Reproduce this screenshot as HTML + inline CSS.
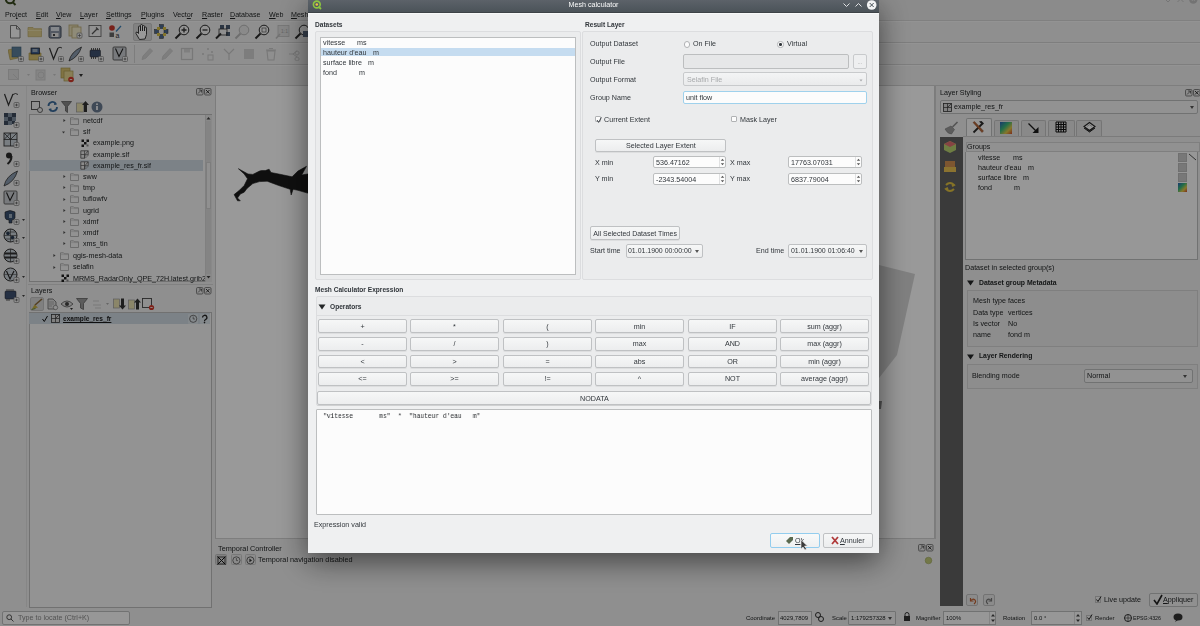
<!DOCTYPE html>
<html><head><meta charset="utf-8"><style>
html,body{margin:0;padding:0;width:1200px;height:626px;overflow:hidden;background:#8f8f8f;font-family:"Liberation Sans", sans-serif;}
.t{position:absolute;white-space:pre;will-change:transform;}
.b{position:absolute;box-sizing:border-box;}
#main{position:absolute;left:0;top:0;width:1200px;height:626px;}
</style></head><body>
<div id="main">
<div class="b" style="left:0px;top:0px;width:1200px;height:626px;background:#eeeeee;"></div>
<div class="b" style="left:0px;top:0px;width:1200px;height:21px;background:#e8e8e8;"></div>
<div class="b" style="left:0px;top:20px;width:1200px;height:1px;background:#d6d6d6;"></div>
<div class="b" style="left:0px;top:42px;width:1200px;height:1px;background:#d2d2d2;"></div>
<div class="b" style="left:0px;top:64px;width:1200px;height:1px;background:#d2d2d2;"></div>
<div class="b" style="left:0px;top:85px;width:1200px;height:1px;background:#d2d2d2;"></div>
<div class="b" style="left:0px;top:21px;width:1200px;height:1px;background:#f6f6f6;"></div>
<div class="b" style="left:0px;top:43px;width:1200px;height:1px;background:#f6f6f6;"></div>
<div class="b" style="left:0px;top:65px;width:1200px;height:1px;background:#f6f6f6;"></div>
<svg class="b" style="left:3px;top:-6px" width="14" height="12"><circle cx="7" cy="5" r="4.2" fill="none" stroke="#3a4a20" stroke-width="2"/><path d="M9.5 8 l3 3" stroke="#3a4a20" stroke-width="2"/></svg>
<svg class="b" style="left:1160px;top:-4px" width="40" height="10"><path d="M5 3 l3 3 l3 -3" stroke="#c4c4c4" fill="none"/><path d="M17.5 6 l3 -3 l3 3" stroke="#c4c4c4" fill="none"/><circle cx="33.3" cy="3.5" r="4.2" fill="#c0c0c0"/><path d="M31.8 2 l3 3 M34.8 2 l-3 3" stroke="#e8e8e8" stroke-width="0.8"/></svg>
<div class="t" style="left:5.2px;top:9.21px;font-size:7.1px;line-height:12px;color:#232627;font-weight:normal;font-family:'Liberation Sans', sans-serif;">Pro<u>j</u>ect</div>
<div class="t" style="left:35.6px;top:9.21px;font-size:7.1px;line-height:12px;color:#232627;font-weight:normal;font-family:'Liberation Sans', sans-serif;"><u>E</u>dit</div>
<div class="t" style="left:56.3px;top:9.21px;font-size:7.1px;line-height:12px;color:#232627;font-weight:normal;font-family:'Liberation Sans', sans-serif;"><u>V</u>iew</div>
<div class="t" style="left:80.3px;top:9.21px;font-size:7.1px;line-height:12px;color:#232627;font-weight:normal;font-family:'Liberation Sans', sans-serif;"><u>L</u>ayer</div>
<div class="t" style="left:106.4px;top:9.21px;font-size:7.1px;line-height:12px;color:#232627;font-weight:normal;font-family:'Liberation Sans', sans-serif;"><u>S</u>ettings</div>
<div class="t" style="left:140.8px;top:9.21px;font-size:7.1px;line-height:12px;color:#232627;font-weight:normal;font-family:'Liberation Sans', sans-serif;"><u>P</u>lugins</div>
<div class="t" style="left:172.6px;top:9.21px;font-size:7.1px;line-height:12px;color:#232627;font-weight:normal;font-family:'Liberation Sans', sans-serif;">Vect<u>o</u>r</div>
<div class="t" style="left:201.5px;top:9.21px;font-size:7.1px;line-height:12px;color:#232627;font-weight:normal;font-family:'Liberation Sans', sans-serif;"><u>R</u>aster</div>
<div class="t" style="left:229.9px;top:9.21px;font-size:7.1px;line-height:12px;color:#232627;font-weight:normal;font-family:'Liberation Sans', sans-serif;"><u>D</u>atabase</div>
<div class="t" style="left:268.7px;top:9.21px;font-size:7.1px;line-height:12px;color:#232627;font-weight:normal;font-family:'Liberation Sans', sans-serif;"><u>W</u>eb</div>
<div class="t" style="left:291.4px;top:9.21px;font-size:7.1px;line-height:12px;color:#232627;font-weight:normal;font-family:'Liberation Sans', sans-serif;"><u>M</u>esh</div>
<svg class="b" style="left:8px;top:24px" width="14" height="15" viewBox="0 0 14 15"><path d="M2.5 1.5 h6 l3.5 3.5 v9 h-9.5z" fill="#fbfbfb" stroke="#6a6a6a" stroke-width="0.9"/><path d="M8.5 1.5 v3.5 h3.5" fill="none" stroke="#6a6a6a" stroke-width="0.9"/></svg>
<svg class="b" style="left:27px;top:25px" width="16" height="13" viewBox="0 0 16 13"><path d="M1 2.5 h5 l1.2 1.2 h7.3 v8 h-13.5z" fill="#dccb8c" stroke="#c2b070" stroke-width="0.8"/><path d="M1 5.5 h13.5" stroke="#e8dca8"/></svg>
<svg class="b" style="left:47.5px;top:24.5px" width="14" height="14" viewBox="0 0 14 14"><rect x="1" y="1" width="12" height="12" rx="1.5" fill="#8b95a5" stroke="#3f4a5a" stroke-width="1"/><rect x="3" y="2" width="8" height="4" fill="#dde2e8"/><rect x="3.5" y="8" width="7" height="4" fill="#e8e8e8"/><rect x="5" y="9" width="2" height="2" fill="#444"/></svg>
<svg class="b" style="left:68px;top:24px" width="15" height="15" viewBox="0 0 15 15"><rect x="1" y="1" width="9" height="11" fill="#e6ddb8" stroke="#b8a870" stroke-width="0.8"/><rect x="4" y="3" width="9" height="11" fill="#efe8c8" stroke="#b8a870" stroke-width="0.8"/><rect x="9" y="9" width="5" height="5" rx="1" fill="#f0f0f0" stroke="#8a8a8a" stroke-width="0.8"/><path d="M11.5 10.2 v2.6 M10.2 11.5 h2.6" stroke="#666" stroke-width="0.9"/></svg>
<svg class="b" style="left:88px;top:24px" width="15" height="15" viewBox="0 0 15 15"><rect x="1" y="1.5" width="12" height="11" fill="#f2f2f2" stroke="#6a6a6a" stroke-width="0.9"/><path d="M4 10 l5 -5 m-1 -1.5 l2.5 2.5" stroke="#555" stroke-width="1.3"/></svg>
<svg class="b" style="left:108px;top:24px" width="14" height="15" viewBox="0 0 14 15"><circle cx="4" cy="4" r="2.8" fill="#c8382c"/><rect x="1.5" y="8.5" width="4.5" height="4.5" fill="#666"/><text x="7.5" y="13.5" font-size="7" font-family="Liberation Sans" fill="#333">a</text><path d="M8 7.5 l5 -5.5" stroke="#3a7fb5" stroke-width="1.2"/></svg>
<div class="b" style="left:132.5px;top:22.5px;width:19.5px;height:18.5px;background:#d9d9d9;border:1px solid #c6c6c6;border-radius:2px;"></div>
<svg class="b" style="left:135px;top:23.5px" width="15" height="17" viewBox="0 0 15 17"><path d="M4.5 15.5 l-3.5 -6 q-0.5 -1.5 1 -1.5 l1.5 1.5 v-6.5 a1 1 0 0 1 2 0 v4 v-5.5 a1 1 0 0 1 2 0 v5.5 v-4.5 a1 1 0 0 1 2 0 v4.5 v-3 a1 1 0 0 1 2 0 v6.5 l-1.5 4.5z" fill="#fff" stroke="#2a2a2a" stroke-width="0.9"/></svg>
<svg class="b" style="left:154px;top:24px" width="15" height="15" viewBox="0 0 15 15"><g fill="#4e6a8e" stroke="#333" stroke-width="0.5"><rect x="5.5" y="0.5" width="4" height="4"/><rect x="10" y="5.5" width="4" height="4"/><rect x="5.5" y="10.5" width="4" height="4"/><rect x="0.5" y="5.5" width="4" height="4"/></g><g fill="#d8c048"><rect x="3" y="3" width="3" height="3"/><rect x="9" y="3" width="3" height="3"/><rect x="3" y="9" width="3" height="3"/><rect x="9" y="9" width="3" height="3"/></g></svg>
<svg class="b" style="left:174px;top:23.5px" width="16" height="16" viewBox="0 0 16 16"><circle cx="10" cy="6" r="4.8" fill="#f4f4f4" stroke="#2b2b2b" stroke-width="1"/><path d="M10 3.5 v5 M7.5 6 h5" stroke="#333" stroke-width="1.3"/><path d="M6.5 9.5 l-5 5" stroke="#2b2b2b" stroke-width="2"/></svg>
<svg class="b" style="left:195px;top:23.5px" width="16" height="16" viewBox="0 0 16 16"><circle cx="10" cy="6" r="4.8" fill="#f4f4f4" stroke="#2b2b2b" stroke-width="1"/><path d="M7.5 6 h5" stroke="#333" stroke-width="1.3"/><path d="M6.5 9.5 l-5 5" stroke="#2b2b2b" stroke-width="2"/></svg>
<svg class="b" style="left:215px;top:23.5px" width="16" height="16" viewBox="0 0 16 16"><rect x="5" y="1" width="4" height="4" fill="#4a5a70"/><rect x="11" y="1" width="4" height="4" fill="#4a5a70"/><rect x="11" y="8" width="4" height="4" fill="#4a5a70"/><rect x="4" y="5" width="8" height="6" fill="none" stroke="#333" stroke-width="0.8"/><path d="M6 9.5 l-5 5" stroke="#2b2b2b" stroke-width="2"/></svg>
<svg class="b" style="left:234px;top:23.5px" width="16" height="16" viewBox="0 0 16 16"><circle cx="10" cy="6" r="4.8" fill="#e6e6e6" stroke="#b8b8b8" stroke-width="1"/><path d="M6.5 9.5 l-5 5" stroke="#b8b8b8" stroke-width="2"/></svg>
<svg class="b" style="left:254px;top:23.5px" width="16" height="16" viewBox="0 0 16 16"><circle cx="10" cy="6" r="4.8" fill="#f4f4f4" stroke="#2b2b2b" stroke-width="1"/><rect x="8" y="4" width="4" height="4" fill="none" stroke="#555" stroke-width="0.7"/><path d="M6.5 9.5 l-5 5" stroke="#2b2b2b" stroke-width="2"/></svg>
<svg class="b" style="left:275px;top:23.5px" width="16" height="16" viewBox="0 0 16 16"><rect x="3" y="1.5" width="11" height="11" fill="#e0e0e0" stroke="#c0c0c0" stroke-width="0.8"/><text x="6" y="9" font-size="5" fill="#aaa">1:1</text><path d="M5 10 l-4 4.5" stroke="#c0c0c0" stroke-width="1.6"/></svg>
<svg class="b" style="left:293.5px;top:23.5px" width="16" height="16" viewBox="0 0 16 16"><circle cx="10" cy="6" r="4.8" fill="#f4f4f4" stroke="#2b2b2b" stroke-width="1"/><rect x="9" y="7" width="6" height="6" fill="#5a6a80"/><path d="M6.5 9.5 l-5 5" stroke="#2b2b2b" stroke-width="2"/></svg>
<svg class="b" style="left:8px;top:46px" width="16" height="16" viewBox="0 0 16 16"><rect x="1" y="3" width="8" height="10" fill="#d8c070" stroke="#a89850" stroke-width="0.6" transform="rotate(-12 5 8)"/><rect x="4" y="1" width="9" height="10" fill="#5d7f99" stroke="#3d5f79" stroke-width="0.6"/><rect x="10.5" y="10.5" width="5" height="5" rx="1" fill="#f0f0f0" stroke="#8a8a8a" stroke-width="0.8"/><path d="M13.0 11.7 v2.6 M11.7 13.0 h2.6" stroke="#666" stroke-width="0.9"/></svg>
<svg class="b" style="left:28px;top:46px" width="16" height="16" viewBox="0 0 16 16"><path d="M1 7 h12 v7 h-12z" fill="#d8c070" stroke="#a89040" stroke-width="0.6"/><rect x="3" y="2" width="8.5" height="6" fill="#3f5f8f" stroke="#222" stroke-width="0.7"/><rect x="4.5" y="3" width="5" height="3" fill="#9ab"/><rect x="10.5" y="10.5" width="5" height="5" rx="1" fill="#f0f0f0" stroke="#8a8a8a" stroke-width="0.8"/><path d="M13.0 11.7 v2.6 M11.7 13.0 h2.6" stroke="#666" stroke-width="0.9"/></svg>
<svg class="b" style="left:48px;top:46px" width="16" height="16" viewBox="0 0 16 16"><path d="M1.5 2 l4 11 l4.5 -11" stroke="#333" fill="none" stroke-width="1.2"/><path d="M10 2 q2 -1.5 4 0" stroke="#333" fill="none" stroke-width="0.9"/><rect x="10.5" y="10.5" width="5" height="5" rx="1" fill="#f0f0f0" stroke="#8a8a8a" stroke-width="0.8"/><path d="M13.0 11.7 v2.6 M11.7 13.0 h2.6" stroke="#666" stroke-width="0.9"/></svg>
<svg class="b" style="left:68px;top:46px" width="16" height="16" viewBox="0 0 16 16"><path d="M1 15 q2 -9 12.5 -14 q-3 10 -12.5 14z" fill="#8a9cb0" stroke="#333" stroke-width="0.8"/><rect x="10.5" y="10.5" width="5" height="5" rx="1" fill="#f0f0f0" stroke="#8a8a8a" stroke-width="0.8"/><path d="M13.0 11.7 v2.6 M11.7 13.0 h2.6" stroke="#666" stroke-width="0.9"/></svg>
<svg class="b" style="left:88px;top:46px" width="16" height="16" viewBox="0 0 16 16"><rect x="2" y="4" width="10.5" height="7" rx="1" fill="#3f5070" stroke="#222" stroke-width="0.5"/><path d="M3.5 2 v2 M5.5 2 v2 M7.5 2 v2 M9.5 2 v2 M11.5 2 v2 M3.5 11 v2 M5.5 11 v2 M7.5 11 v2" stroke="#333" stroke-width="0.8"/><rect x="10.5" y="10.5" width="5" height="5" rx="1" fill="#f0f0f0" stroke="#8a8a8a" stroke-width="0.8"/><path d="M13.0 11.7 v2.6 M11.7 13.0 h2.6" stroke="#666" stroke-width="0.9"/></svg>
<svg class="b" style="left:112px;top:46px" width="16" height="16" viewBox="0 0 16 16"><rect x="1" y="1" width="13" height="13" rx="1" fill="#c8ccd0" stroke="#555" stroke-width="0.9"/><path d="M3.5 2.5 l3.5 8 l4 -8" stroke="#222" fill="none" stroke-width="1.1"/><rect x="10.5" y="10.5" width="5" height="5" rx="1" fill="#f0f0f0" stroke="#8a8a8a" stroke-width="0.8"/><path d="M13.0 11.7 v2.6 M11.7 13.0 h2.6" stroke="#666" stroke-width="0.9"/></svg>
<div class="b" style="left:134px;top:45px;width:1px;height:18px;background:#d0d0d0;"></div>
<svg class="b" style="left:140px;top:47px" width="14" height="14" viewBox="0 0 14 14"><path d="M2 12.5 l1 -3.5 l7 -7.5 l2.5 2.5 l-7 7.5z" fill="#d2d2d2" stroke="#c8c8c8" stroke-width="0.8"/></svg>
<svg class="b" style="left:159.6px;top:47px" width="14" height="14" viewBox="0 0 14 14"><path d="M2 12.5 l1 -3.5 l7 -7.5 l2.5 2.5 l-7 7.5z" fill="#d2d2d2" stroke="#c8c8c8" stroke-width="0.8"/></svg>
<svg class="b" style="left:180px;top:47px" width="14" height="14" viewBox="0 0 14 14"><rect x="1.5" y="1.5" width="11" height="11" fill="none" stroke="#c8c8c8" stroke-width="1.2"/><rect x="4" y="2" width="6" height="3.5" fill="#d4d4d4"/></svg>
<svg class="b" style="left:201px;top:47px" width="14" height="14" viewBox="0 0 14 14"><circle cx="2" cy="7" r="1" fill="#c8c8c8"/><circle cx="7" cy="2" r="1" fill="#c8c8c8"/><circle cx="11" cy="5" r="1" fill="#c8c8c8"/><rect x="7" y="8" width="5" height="5" fill="none" stroke="#c8c8c8"/></svg>
<svg class="b" style="left:221.6px;top:47px" width="14" height="14" viewBox="0 0 14 14"><path d="M2 2 l5 5 l5 -5 M7 7 v6" stroke="#c8c8c8" stroke-width="1.2" fill="none"/></svg>
<svg class="b" style="left:242px;top:47px" width="14" height="14" viewBox="0 0 14 14"><rect x="2" y="2" width="10" height="10" fill="#d0d0d0"/></svg>
<svg class="b" style="left:264px;top:47px" width="14" height="14" viewBox="0 0 14 14"><path d="M3 4 h8 l-1 9 h-6z M2 3 h10 M5 1.5 h4" stroke="#c8c8c8" stroke-width="1.1" fill="none"/></svg>
<svg class="b" style="left:287.5px;top:47px" width="14" height="14" viewBox="0 0 14 14"><path d="M1 7 h4 M9 4 a2 2 0 1 0 0.1 0 M9 10 a2 2 0 1 0 0.1 0 M5 7 l4 -3 M5 7 l4 3" stroke="#c8c8c8" stroke-width="1" fill="none"/></svg>
<svg class="b" style="left:7px;top:68px" width="14" height="14" viewBox="0 0 14 14"><rect x="1.5" y="1.5" width="10" height="10" fill="#dedede" stroke="#cdcdcd"/><path d="M6 6 l6 6" stroke="#cdcdcd"/></svg>
<svg class="b" style="left:26.5px;top:74px" width="4" height="3"><path d="M0 0 h3 l-1.5 2z" fill="#c8c8c8"/></svg>
<svg class="b" style="left:34px;top:68px" width="14" height="14" viewBox="0 0 14 14"><rect x="2" y="2" width="9" height="10" fill="#dedede" stroke="#cdcdcd"/><circle cx="7" cy="7" r="3" fill="none" stroke="#cdcdcd"/></svg>
<svg class="b" style="left:52.5px;top:74px" width="4" height="3"><path d="M0 0 h3 l-1.5 2z" fill="#c8c8c8"/></svg>
<svg class="b" style="left:60px;top:67px" width="16" height="16" viewBox="0 0 16 16"><rect x="1" y="1" width="9" height="10" fill="#d8c070" stroke="#a89850" stroke-width="0.7"/><rect x="4" y="4" width="9" height="10" fill="#e4d490" stroke="#a89850" stroke-width="0.7"/><circle cx="11" cy="12.5" r="2.8" fill="#d03a2c"/><path d="M9.8 12.5 h2.4" stroke="#fff" stroke-width="0.8"/></svg>
<svg class="b" style="left:79px;top:74px" width="5" height="4"><path d="M0 0 h4 l-2 3z" fill="#333"/></svg>
<div class="b" style="left:26px;top:86px;width:1px;height:521px;background:#e0e0e0;"></div>
<svg class="b" style="left:3px;top:92px" width="18" height="17" viewBox="0 0 18 17"><path d="M1.5 2 l4 11 l4.5 -11" stroke="#333" fill="none" stroke-width="1.2"/><path d="M10 2.5 q2.5 -2 5 0" stroke="#333" fill="none" stroke-width="0.9"/><rect x="11" y="10.5" width="5" height="5" rx="1" fill="#f0f0f0" stroke="#8a8a8a" stroke-width="0.8"/><path d="M13.5 11.7 v2.6 M12.2 13.0 h2.6" stroke="#666" stroke-width="0.9"/></svg>
<svg class="b" style="left:3px;top:112px" width="18" height="17" viewBox="0 0 18 17"><g fill="#3d4a5c"><rect x="1" y="1" width="4" height="4"/><rect x="9" y="1" width="4" height="4"/><rect x="5" y="5" width="4" height="4"/><rect x="1" y="9" width="4" height="4"/><rect x="9" y="9" width="3" height="3"/></g><g fill="#8090a0"><rect x="5" y="1" width="4" height="4"/><rect x="1" y="5" width="4" height="4"/><rect x="9" y="5" width="4" height="4"/><rect x="5" y="9" width="4" height="4"/></g><rect x="11" y="10.5" width="5" height="5" rx="1" fill="#f0f0f0" stroke="#8a8a8a" stroke-width="0.8"/><path d="M13.5 11.7 v2.6 M12.2 13.0 h2.6" stroke="#666" stroke-width="0.9"/></svg>
<svg class="b" style="left:3px;top:132px" width="18" height="17" viewBox="0 0 18 17"><rect x="1" y="1" width="13" height="13" fill="#c8d0d8" stroke="#333" stroke-width="0.9"/><path d="M1 7.5 h13 M7.5 1 v13 M1 1 l6.5 6.5 M7.5 1 l-6.5 6.5 M14 1 l-6.5 6.5" stroke="#333" stroke-width="0.8"/><rect x="11" y="10.5" width="5" height="5" rx="1" fill="#f0f0f0" stroke="#8a8a8a" stroke-width="0.8"/><path d="M13.5 11.7 v2.6 M12.2 13.0 h2.6" stroke="#666" stroke-width="0.9"/></svg>
<svg class="b" style="left:3px;top:151px" width="18" height="17" viewBox="0 0 18 17"><circle cx="6" cy="4.5" r="3" fill="#2a2a2a"/><path d="M8.5 5 q0 5 -4 8" stroke="#2a2a2a" stroke-width="2" fill="none"/><rect x="11" y="10.5" width="5" height="5" rx="1" fill="#f0f0f0" stroke="#8a8a8a" stroke-width="0.8"/><path d="M13.5 11.7 v2.6 M12.2 13.0 h2.6" stroke="#666" stroke-width="0.9"/></svg>
<svg class="b" style="left:3px;top:170px" width="18" height="17" viewBox="0 0 18 17"><path d="M1 16 q2 -10 13.5 -15 q-3 11 -13.5 15z" fill="#8a9cb0" stroke="#333" stroke-width="0.8"/><rect x="11" y="10.5" width="5" height="5" rx="1" fill="#f0f0f0" stroke="#8a8a8a" stroke-width="0.8"/><path d="M13.5 11.7 v2.6 M12.2 13.0 h2.6" stroke="#666" stroke-width="0.9"/></svg>
<svg class="b" style="left:3px;top:190px" width="18" height="17" viewBox="0 0 18 17"><rect x="1" y="1" width="13" height="13" rx="1" fill="#c8ccd0" stroke="#555" stroke-width="0.9"/><path d="M3.5 2.5 l3.5 8 l4 -8" stroke="#222" fill="none" stroke-width="1.1"/><rect x="11" y="10.5" width="5" height="5" rx="1" fill="#f0f0f0" stroke="#8a8a8a" stroke-width="0.8"/><path d="M13.5 11.7 v2.6 M12.2 13.0 h2.6" stroke="#666" stroke-width="0.9"/></svg>
<svg class="b" style="left:3px;top:209px" width="18" height="17" viewBox="0 0 18 17"><path d="M2 3 q5 -3 10 0 v6 q-1 2 -3 2 v3 h-3 v-3 q-4 0 -4 -3z" fill="#3a5070" stroke="#222" stroke-width="0.6"/><rect x="6" y="5" width="3" height="4" fill="#9ab"/><rect x="11" y="10.5" width="5" height="5" rx="1" fill="#f0f0f0" stroke="#8a8a8a" stroke-width="0.8"/><path d="M13.5 11.7 v2.6 M12.2 13.0 h2.6" stroke="#666" stroke-width="0.9"/></svg>
<svg class="b" style="left:22px;top:218.5px" width="4" height="3"><path d="M0 0 h3 l-1.5 2z" fill="#444"/></svg>
<svg class="b" style="left:3px;top:228px" width="18" height="17" viewBox="0 0 18 17"><circle cx="7.5" cy="7.5" r="6.5" fill="#c8d0d8" stroke="#333" stroke-width="1"/><path d="M1 7.5 h13 M7.5 1 v13 M2.5 4 h10 M2.5 11 h10" stroke="#333" stroke-width="0.6"/><circle cx="5" cy="5.5" r="1.8" fill="#2a3a50"/><circle cx="9.5" cy="9.5" r="1.8" fill="#2a3a50"/><rect x="11" y="10.5" width="5" height="5" rx="1" fill="#f0f0f0" stroke="#8a8a8a" stroke-width="0.8"/><path d="M13.5 11.7 v2.6 M12.2 13.0 h2.6" stroke="#666" stroke-width="0.9"/></svg>
<svg class="b" style="left:22px;top:237px" width="4" height="3"><path d="M0 0 h3 l-1.5 2z" fill="#444"/></svg>
<svg class="b" style="left:3px;top:247.5px" width="18" height="17" viewBox="0 0 18 17"><circle cx="7.5" cy="7.5" r="6.5" fill="#c8d0d8" stroke="#333" stroke-width="1"/><rect x="1.5" y="4.5" width="12" height="2" fill="#333"/><rect x="1.5" y="8.5" width="12" height="2" fill="#333"/><path d="M7.5 1 v13" stroke="#333" stroke-width="0.7"/><rect x="11" y="10.5" width="5" height="5" rx="1" fill="#f0f0f0" stroke="#8a8a8a" stroke-width="0.8"/><path d="M13.5 11.7 v2.6 M12.2 13.0 h2.6" stroke="#666" stroke-width="0.9"/></svg>
<svg class="b" style="left:3px;top:267px" width="18" height="17" viewBox="0 0 18 17"><circle cx="7.5" cy="7.5" r="6.5" fill="#c8d0d8" stroke="#333" stroke-width="1"/><path d="M3.5 4 l3.5 8 l4 -8" stroke="#222" fill="none" stroke-width="1.1"/><path d="M1 7.5 h13" stroke="#333" stroke-width="0.5"/><rect x="11" y="10.5" width="5" height="5" rx="1" fill="#f0f0f0" stroke="#8a8a8a" stroke-width="0.8"/><path d="M13.5 11.7 v2.6 M12.2 13.0 h2.6" stroke="#666" stroke-width="0.9"/></svg>
<svg class="b" style="left:22px;top:276px" width="4" height="3"><path d="M0 0 h3 l-1.5 2z" fill="#444"/></svg>
<svg class="b" style="left:3px;top:287px" width="18" height="17" viewBox="0 0 18 17"><rect x="2" y="4" width="11" height="8" rx="1" fill="#3f5070" stroke="#222" stroke-width="0.5"/><path d="M4 2 v2 M6 2 v2 M8 2 v2 M10 2 v2 M4 12 v2 M6 12 v2" stroke="#333" stroke-width="0.8"/><rect x="11" y="10.5" width="5" height="5" rx="1" fill="#f0f0f0" stroke="#8a8a8a" stroke-width="0.8"/><path d="M13.5 11.7 v2.6 M12.2 13.0 h2.6" stroke="#666" stroke-width="0.9"/></svg>
<svg class="b" style="left:22px;top:295px" width="4" height="3"><path d="M0 0 h3 l-1.5 2z" fill="#444"/></svg>
<div class="t" style="left:31.2px;top:87.01px;font-size:7.15px;line-height:12px;color:#232627;font-weight:normal;font-family:'Liberation Sans', sans-serif;">Browser</div>
<svg class="b" style="left:196px;top:88.2px" width="16" height="8" viewBox="0 0 16 8"><rect x="0.5" y="0.5" width="6.5" height="6.5" rx="1.2" fill="#e8e8e8" stroke="#666" stroke-width="0.8"/><path d="M2 5.5 l3.5 -3.5 M3 2 h2.5 v2.5" stroke="#444" stroke-width="0.7" fill="none"/><rect x="8.5" y="0.5" width="6.5" height="6.5" rx="1.2" fill="#e8e8e8" stroke="#666" stroke-width="0.8"/><path d="M10 2 l3.5 3.5 M13.5 2 l-3.5 3.5" stroke="#222" stroke-width="0.9"/></svg>
<svg class="b" style="left:30px;top:99.5px" width="14" height="14" viewBox="0 0 14 14"><rect x="1.5" y="1.5" width="8" height="8" fill="none" stroke="#444" stroke-width="0.9"/><circle cx="10" cy="10" r="2.5" fill="#eee" stroke="#444" stroke-width="0.8"/></svg>
<svg class="b" style="left:45.5px;top:99.5px" width="14" height="14" viewBox="0 0 14 14"><path d="M2.5 6 a4 4 0 0 1 7.5 -2 M11 7 a4 4 0 0 1 -7.5 2" stroke="#3a6a9a" stroke-width="1.8" fill="none"/><path d="M8.5 2 l2.5 2.5 l-3 0.5z M5 11.5 l-2.5 -2.5 l3 -0.5z" fill="#3a6a9a"/></svg>
<svg class="b" style="left:60px;top:99.5px" width="14" height="14" viewBox="0 0 14 14"><path d="M1.5 1.5 h10 l-4 5 v6 l-2 -1.5 v-4.5z" fill="#888" stroke="#555" stroke-width="0.7"/></svg>
<svg class="b" style="left:75px;top:99.5px" width="14" height="14" viewBox="0 0 14 14"><rect x="1.5" y="3" width="7" height="9" fill="#e8dfb0" stroke="#999" stroke-width="0.7"/><path d="M9 12 v-7 h-2 l3.5 -4 l3.5 4 h-2 v7z" fill="#333"/></svg>
<svg class="b" style="left:90px;top:99.5px" width="14" height="14" viewBox="0 0 14 14"><circle cx="7" cy="7" r="5.5" fill="#6a7a90"/><rect x="6.2" y="6" width="1.6" height="4" fill="#fff"/><circle cx="7" cy="4.2" r="0.9" fill="#fff"/></svg>
<div class="b" style="left:28.5px;top:113.8px;width:183.5px;height:168.39999999999998px;background:#f6f6f6;border:1px solid #bdbdbd;"></div>
<div class="b" style="left:29px;top:160.3px;width:174px;height:10.699999999999989px;background:#cfd9e2;"></div>
<svg class="b" style="left:61.9px;top:118.3px" width="5" height="5"><path d="M1.4 1 l2.2 1.5 l-2.2 1.5z" fill="#555"/></svg>
<svg class="b" style="left:70.2px;top:116.8px" width="9" height="8"><path d="M0.5 0.8 h3 l0.9 1 h4.1 v5.7 h-8z" fill="#f4f4f4" stroke="#a4a4a4" stroke-width="0.8"/><path d="M0.5 2.6 h8" stroke="#bbb" stroke-width="0.5"/></svg>
<div class="t" style="left:82.7px;top:115.01px;font-size:7.15px;line-height:12px;color:#232627;font-weight:normal;font-family:'Liberation Sans', sans-serif;">netcdf</div>
<svg class="b" style="left:61.4px;top:130px" width="5" height="5"><path d="M1 1.4 h3 l-1.5 2.2z" fill="#555"/></svg>
<svg class="b" style="left:70.2px;top:128px" width="9" height="8"><path d="M0.5 0.8 h3 l0.9 1 h4.1 v5.7 h-8z" fill="#f4f4f4" stroke="#a4a4a4" stroke-width="0.8"/><path d="M0.5 2.6 h8" stroke="#bbb" stroke-width="0.5"/></svg>
<div class="t" style="left:82.7px;top:126.21px;font-size:7.15px;line-height:12px;color:#232627;font-weight:normal;font-family:'Liberation Sans', sans-serif;">slf</div>
<svg class="b" style="left:80.7px;top:138.6px" width="9" height="9"><g fill="#1e1e1e"><rect x="0.5" y="0.5" width="2.5" height="2.5"/><rect x="5.5" y="0.5" width="2.5" height="2.5"/><rect x="3" y="3" width="2.5" height="2.5"/><rect x="0.5" y="5.5" width="2.5" height="2.5"/></g><rect x="5.5" y="5.5" width="2" height="2" fill="#888"/></svg>
<div class="t" style="left:92.7px;top:137.31px;font-size:7.15px;line-height:12px;color:#232627;font-weight:normal;font-family:'Liberation Sans', sans-serif;">example.png</div>
<svg class="b" style="left:80.2px;top:149.8px" width="9" height="9"><path d="M0.8 0.8 h7.4 v4 h-3.4 v3.4 h-4z" fill="#e8e8e8" stroke="#555" stroke-width="0.8"/><path d="M0.8 4.5 h4 M4.5 0.8 v7.4 M4.8 4.8 l3.4 -4" stroke="#555" stroke-width="0.7"/><path d="M5.5 8 l3 -3" stroke="#777" stroke-width="0.6"/></svg>
<div class="t" style="left:92.7px;top:148.51px;font-size:7.15px;line-height:12px;color:#232627;font-weight:normal;font-family:'Liberation Sans', sans-serif;">example.slf</div>
<svg class="b" style="left:80.2px;top:161.0px" width="9" height="9"><path d="M0.8 0.8 h7.4 v4 h-3.4 v3.4 h-4z" fill="#e8e8e8" stroke="#555" stroke-width="0.8"/><path d="M0.8 4.5 h4 M4.5 0.8 v7.4 M4.8 4.8 l3.4 -4" stroke="#555" stroke-width="0.7"/><path d="M5.5 8 l3 -3" stroke="#777" stroke-width="0.6"/></svg>
<div class="t" style="left:92.7px;top:159.71px;font-size:7.15px;line-height:12px;color:#232627;font-weight:normal;font-family:'Liberation Sans', sans-serif;">example_res_fr.slf</div>
<svg class="b" style="left:61.9px;top:174.2px" width="5" height="5"><path d="M1.4 1 l2.2 1.5 l-2.2 1.5z" fill="#555"/></svg>
<svg class="b" style="left:70.2px;top:172.7px" width="9" height="8"><path d="M0.5 0.8 h3 l0.9 1 h4.1 v5.7 h-8z" fill="#f4f4f4" stroke="#a4a4a4" stroke-width="0.8"/><path d="M0.5 2.6 h8" stroke="#bbb" stroke-width="0.5"/></svg>
<div class="t" style="left:82.7px;top:170.91px;font-size:7.15px;line-height:12px;color:#232627;font-weight:normal;font-family:'Liberation Sans', sans-serif;">sww</div>
<svg class="b" style="left:61.9px;top:185.4px" width="5" height="5"><path d="M1.4 1 l2.2 1.5 l-2.2 1.5z" fill="#555"/></svg>
<svg class="b" style="left:70.2px;top:183.9px" width="9" height="8"><path d="M0.5 0.8 h3 l0.9 1 h4.1 v5.7 h-8z" fill="#f4f4f4" stroke="#a4a4a4" stroke-width="0.8"/><path d="M0.5 2.6 h8" stroke="#bbb" stroke-width="0.5"/></svg>
<div class="t" style="left:82.7px;top:182.11px;font-size:7.15px;line-height:12px;color:#232627;font-weight:normal;font-family:'Liberation Sans', sans-serif;">tmp</div>
<svg class="b" style="left:61.9px;top:196.6px" width="5" height="5"><path d="M1.4 1 l2.2 1.5 l-2.2 1.5z" fill="#555"/></svg>
<svg class="b" style="left:70.2px;top:195.1px" width="9" height="8"><path d="M0.5 0.8 h3 l0.9 1 h4.1 v5.7 h-8z" fill="#f4f4f4" stroke="#a4a4a4" stroke-width="0.8"/><path d="M0.5 2.6 h8" stroke="#bbb" stroke-width="0.5"/></svg>
<div class="t" style="left:82.7px;top:193.31px;font-size:7.15px;line-height:12px;color:#232627;font-weight:normal;font-family:'Liberation Sans', sans-serif;">tuflowfv</div>
<svg class="b" style="left:61.9px;top:207.8px" width="5" height="5"><path d="M1.4 1 l2.2 1.5 l-2.2 1.5z" fill="#555"/></svg>
<svg class="b" style="left:70.2px;top:206.3px" width="9" height="8"><path d="M0.5 0.8 h3 l0.9 1 h4.1 v5.7 h-8z" fill="#f4f4f4" stroke="#a4a4a4" stroke-width="0.8"/><path d="M0.5 2.6 h8" stroke="#bbb" stroke-width="0.5"/></svg>
<div class="t" style="left:82.7px;top:204.51px;font-size:7.15px;line-height:12px;color:#232627;font-weight:normal;font-family:'Liberation Sans', sans-serif;">ugrid</div>
<svg class="b" style="left:61.9px;top:219.0px" width="5" height="5"><path d="M1.4 1 l2.2 1.5 l-2.2 1.5z" fill="#555"/></svg>
<svg class="b" style="left:70.2px;top:217.5px" width="9" height="8"><path d="M0.5 0.8 h3 l0.9 1 h4.1 v5.7 h-8z" fill="#f4f4f4" stroke="#a4a4a4" stroke-width="0.8"/><path d="M0.5 2.6 h8" stroke="#bbb" stroke-width="0.5"/></svg>
<div class="t" style="left:82.7px;top:215.71px;font-size:7.15px;line-height:12px;color:#232627;font-weight:normal;font-family:'Liberation Sans', sans-serif;">xdmf</div>
<svg class="b" style="left:61.9px;top:230.2px" width="5" height="5"><path d="M1.4 1 l2.2 1.5 l-2.2 1.5z" fill="#555"/></svg>
<svg class="b" style="left:70.2px;top:228.7px" width="9" height="8"><path d="M0.5 0.8 h3 l0.9 1 h4.1 v5.7 h-8z" fill="#f4f4f4" stroke="#a4a4a4" stroke-width="0.8"/><path d="M0.5 2.6 h8" stroke="#bbb" stroke-width="0.5"/></svg>
<div class="t" style="left:82.7px;top:226.91px;font-size:7.15px;line-height:12px;color:#232627;font-weight:normal;font-family:'Liberation Sans', sans-serif;">xmdf</div>
<svg class="b" style="left:61.9px;top:241.4px" width="5" height="5"><path d="M1.4 1 l2.2 1.5 l-2.2 1.5z" fill="#555"/></svg>
<svg class="b" style="left:70.2px;top:239.9px" width="9" height="8"><path d="M0.5 0.8 h3 l0.9 1 h4.1 v5.7 h-8z" fill="#f4f4f4" stroke="#a4a4a4" stroke-width="0.8"/><path d="M0.5 2.6 h8" stroke="#bbb" stroke-width="0.5"/></svg>
<div class="t" style="left:82.7px;top:238.11px;font-size:7.15px;line-height:12px;color:#232627;font-weight:normal;font-family:'Liberation Sans', sans-serif;">xms_tin</div>
<svg class="b" style="left:52px;top:253.3px" width="5" height="5"><path d="M1.4 1 l2.2 1.5 l-2.2 1.5z" fill="#555"/></svg>
<svg class="b" style="left:60.2px;top:251.8px" width="9" height="8"><path d="M0.5 0.8 h3 l0.9 1 h4.1 v5.7 h-8z" fill="#f4f4f4" stroke="#a4a4a4" stroke-width="0.8"/><path d="M0.5 2.6 h8" stroke="#bbb" stroke-width="0.5"/></svg>
<div class="t" style="left:72.7px;top:250.01px;font-size:7.15px;line-height:12px;color:#232627;font-weight:normal;font-family:'Liberation Sans', sans-serif;">qgis-mesh-data</div>
<svg class="b" style="left:52px;top:264.5px" width="5" height="5"><path d="M1.4 1 l2.2 1.5 l-2.2 1.5z" fill="#555"/></svg>
<svg class="b" style="left:60.2px;top:263px" width="9" height="8"><path d="M0.5 0.8 h3 l0.9 1 h4.1 v5.7 h-8z" fill="#f4f4f4" stroke="#a4a4a4" stroke-width="0.8"/><path d="M0.5 2.6 h8" stroke="#bbb" stroke-width="0.5"/></svg>
<div class="t" style="left:72.7px;top:261.21px;font-size:7.15px;line-height:12px;color:#232627;font-weight:normal;font-family:'Liberation Sans', sans-serif;">selafin</div>
<svg class="b" style="left:60.7px;top:273.8px" width="9" height="9"><g fill="#1e1e1e"><rect x="0.5" y="0.5" width="2.5" height="2.5"/><rect x="5.5" y="0.5" width="2.5" height="2.5"/><rect x="3" y="3" width="2.5" height="2.5"/><rect x="0.5" y="5.5" width="2.5" height="2.5"/></g><rect x="5.5" y="5.5" width="2" height="2" fill="#888"/></svg>
<div class="t" style="left:72.7px;top:272.51px;font-size:7.15px;line-height:12px;color:#232627;font-weight:normal;font-family:'Liberation Sans', sans-serif;">MRMS_RadarOnly_QPE_72H.latest.grib2</div>
<div class="b" style="left:205px;top:114.5px;width:6.5px;height:167.0px;background:#e4e4e4;border-left:1px solid #d6d6d6;"></div>
<div class="b" style="left:205.5px;top:121px;width:5.5px;height:153px;background:#dcdcdc;"></div>
<div class="b" style="left:205.5px;top:161.7px;width:5.5px;height:47.30000000000001px;background:#f0f0f0;border:1px solid #d0d0d0;"></div>
<svg class="b" style="left:206px;top:115.5px" width="5" height="5"><path d="M0.5 3.5 h4 l-2 -2.5z" fill="#444"/></svg>
<svg class="b" style="left:206px;top:275px" width="5" height="5"><path d="M0.5 1 h4 l-2 2.5z" fill="#444"/></svg>
<div class="b" style="left:28px;top:284px;width:185px;height:1px;background:#d8d8d8;"></div>
<div class="t" style="left:30.75px;top:285.01px;font-size:7.15px;line-height:12px;color:#232627;font-weight:normal;font-family:'Liberation Sans', sans-serif;">Layers</div>
<svg class="b" style="left:196px;top:286.5px" width="16" height="8" viewBox="0 0 16 8"><rect x="0.5" y="0.5" width="6.5" height="6.5" rx="1.2" fill="#e8e8e8" stroke="#666" stroke-width="0.8"/><path d="M2 5.5 l3.5 -3.5 M3 2 h2.5 v2.5" stroke="#444" stroke-width="0.7" fill="none"/><rect x="8.5" y="0.5" width="6.5" height="6.5" rx="1.2" fill="#e8e8e8" stroke="#666" stroke-width="0.8"/><path d="M10 2 l3.5 3.5 M13.5 2 l-3.5 3.5" stroke="#222" stroke-width="0.9"/></svg>
<div class="b" style="left:29.5px;top:297px;width:14.700000000000003px;height:14px;background:#d6d6d6;border:1px solid #c2c2c2;border-radius:2px;"></div>
<svg class="b" style="left:30px;top:297px" width="14" height="14" viewBox="0 0 14 14"><path d="M2 12 l2.5 -4.5 l3.5 3z" fill="#c8b040"/><path d="M5 8 l7 -6" stroke="#8a6a3a" stroke-width="1.6"/><path d="M1.5 12.5 l4 -1" stroke="#6a8a3a" stroke-width="1.2"/></svg>
<svg class="b" style="left:45px;top:297px" width="14" height="14" viewBox="0 0 14 14"><path d="M3 2 h5 l3 3 v7 h-8z" fill="#ddd" stroke="#666" stroke-width="0.8"/><path d="M4 5 h5 M4 7 h5 M4 9 h3" stroke="#888" stroke-width="0.6"/><circle cx="10.5" cy="10.5" r="2.2" fill="#eee" stroke="#666" stroke-width="0.6"/></svg>
<svg class="b" style="left:60px;top:297px" width="14" height="14" viewBox="0 0 14 14"><path d="M1 7 q6 -6 12 0 q-6 6 -12 0z" fill="#ddd" stroke="#555" stroke-width="0.8"/><circle cx="7" cy="7" r="2" fill="#444"/><path d="M10 11 h3 l-1.5 2z" fill="#333"/></svg>
<svg class="b" style="left:75px;top:297px" width="14" height="14" viewBox="0 0 14 14"><path d="M1.5 1.5 h11 l-4 5 v6 l-3 -1.5 v-4.5z" fill="#999" stroke="#555" stroke-width="0.7"/></svg>
<svg class="b" style="left:91px;top:297px" width="14" height="14" viewBox="0 0 14 14"><path d="M2 4 h6 M2 8 h8 M4 11 h6" stroke="#cacaca" stroke-width="1.2"/></svg>
<svg class="b" style="left:106px;top:303px" width="4" height="3"><path d="M0 0 h3 l-1.5 2z" fill="#aaa"/></svg>
<svg class="b" style="left:111.5px;top:297px" width="14" height="14" viewBox="0 0 14 14"><rect x="1.5" y="2" width="6" height="9" fill="#e8dfb0" stroke="#999" stroke-width="0.7"/><path d="M9 1.5 v7 h-2 l3.5 4 l3.5 -4 h-2 v-7z" fill="#333"/></svg>
<svg class="b" style="left:126.5px;top:297px" width="14" height="14" viewBox="0 0 14 14"><rect x="1.5" y="3" width="6" height="9" fill="#e8dfb0" stroke="#999" stroke-width="0.7"/><path d="M9 12.5 v-7 h-2 l3.5 -4 l3.5 4 h-2 v7z" fill="#333"/></svg>
<svg class="b" style="left:141px;top:297px" width="14" height="14" viewBox="0 0 14 14"><rect x="1.5" y="1.5" width="9" height="9" fill="none" stroke="#444" stroke-width="0.9"/><circle cx="10.5" cy="10.5" r="2.6" fill="#d03a2c"/><path d="M9.3 10.5 h2.4" stroke="#fff" stroke-width="0.8"/></svg>
<div class="b" style="left:28.5px;top:311.5px;width:183.5px;height:296.0px;background:#f6f6f6;border:1px solid #bdbdbd;"></div>
<div class="b" style="left:29.2px;top:312.5px;width:181.3px;height:11.800000000000011px;background:#cfd9e2;"></div>
<svg class="b" style="left:40.5px;top:314.5px" width="8" height="8"><path d="M1.5 4 l1.8 2.5 l3.2 -5.5" stroke="#111" fill="none" stroke-width="1"/></svg>
<svg class="b" style="left:51px;top:314px" width="9" height="9"><rect x="0.5" y="0.5" width="8" height="8" fill="#d8d8d8" stroke="#333" stroke-width="0.8"/><path d="M0.5 4.5 h8 M4.5 0.5 v8 M4.5 4.5 l4 -4" stroke="#333" stroke-width="0.7"/></svg>
<div class="t" style="left:63.1px;top:313.10px;font-size:6.6px;line-height:12px;color:#1a1a1a;font-weight:bold;font-family:'Liberation Sans', sans-serif;text-decoration:underline;">example_res_fr</div>
<div class="b" style="left:188.3px;top:314px;width:10.199999999999989px;height:9.5px;background:#dde4ea;border-radius:1px;"></div>
<div class="b" style="left:199.5px;top:314px;width:10.199999999999989px;height:9.5px;background:#dde4ea;border-radius:1px;"></div>
<svg class="b" style="left:188px;top:314px" width="22" height="10"><circle cx="5.2" cy="4.8" r="3.6" fill="none" stroke="#555" stroke-width="0.8"/><path d="M5.2 2.5 v2.5 h1.8" stroke="#555" stroke-width="0.7" fill="none"/><path d="M14.5 3.5 a2.2 2.2 0 1 1 3 2 q-1 0.5 -1 1.8" stroke="#222" stroke-width="1.3" fill="none"/><circle cx="16.5" cy="8.6" r="0.8" fill="#222"/></svg>
<div class="b" style="left:214.5px;top:86px;width:720.5px;height:453px;background:#ffffff;border-left:1px solid #cfcfcf;border-right:1px solid #cfcfcf;border-bottom:1px solid #d2d2d2;"></div>
<svg class="b" style="left:225px;top:150px" width="90" height="60"><path d="M13.4 18.7 L23.0 24.0 L27.8 24.4 L34.5 21.1 L36.4 20.6 L40.3 20.6 L44.1 19.2 L46.0 22.5 L53.7 24.0 L67.1 26.8 L72.9 21.1 L81.5 16.3 L76.7 25.0 L82.5 24.0 L87.0 24.0 L87.0 43.1 L82.5 43.1 L72.9 40.3 L68.1 39.3 L66.2 45.0 L65.2 39.3 L53.7 35.5 L42.2 31.2 L34.5 31.6 L27.8 33.6 L22.0 38.4 L19.2 42.2 L15.3 44.1 L12.5 48.0 L15.3 50.8 L12.5 50.8 L9.1 44.6 L14.4 40.3 L19.2 35.5 L22.5 28.8 L19.2 24.0Z" fill="#1a1a1a" stroke="#1a1a1a" stroke-width="0.6" stroke-linejoin="round"/></svg>
<svg class="b" style="left:870px;top:255px" width="60" height="160"><path d="M9 10 L45 19 L27 100 L9 123z" fill="#d6d6d6"/><path d="M9 146 l3 0 l-1 8 l-2 0z" fill="#888"/></svg>
<div class="t" style="left:217.6px;top:542.62px;font-size:7.3px;line-height:12px;color:#232627;font-weight:normal;font-family:'Liberation Sans', sans-serif;">Temporal Controller</div>
<div class="b" style="left:215px;top:553.7px;width:11.699999999999989px;height:11.799999999999955px;background:#d8d8d8;border:1px solid #c0c0c0;border-radius:1.5px;"></div>
<div class="b" style="left:230.8px;top:553.7px;width:11.699999999999989px;height:11.799999999999955px;background:#e8e8e8;border:1px solid #c8c8c8;border-radius:1.5px;"></div>
<div class="b" style="left:244.5px;top:553.7px;width:11.699999999999989px;height:11.799999999999955px;background:#e8e8e8;border:1px solid #c8c8c8;border-radius:1.5px;"></div>
<svg class="b" style="left:215.5px;top:554.5px" width="11" height="11" viewBox="0 0 11 11"><rect x="2" y="2" width="7" height="7" fill="none" stroke="#222" stroke-width="0.8"/><path d="M1.5 1.5 l8 8 M9.5 1.5 l-8 8" stroke="#111" stroke-width="1"/></svg>
<svg class="b" style="left:231.3px;top:554.5px" width="11" height="11" viewBox="0 0 11 11"><circle cx="5.4" cy="5.4" r="3.6" fill="none" stroke="#555" stroke-width="0.8"/><path d="M5.4 3 v2.6 h1.6" stroke="#555" stroke-width="0.7" fill="none"/></svg>
<svg class="b" style="left:245px;top:554.5px" width="11" height="11" viewBox="0 0 11 11"><circle cx="5.4" cy="5.4" r="3.6" fill="none" stroke="#444" stroke-width="0.8"/><path d="M4.4 3.6 l2.6 1.8 l-2.6 1.8z" fill="#333"/></svg>
<div class="t" style="left:258.2px;top:554.22px;font-size:7.3px;line-height:12px;color:#232627;font-weight:normal;font-family:'Liberation Sans', sans-serif;">Temporal navigation disabled</div>
<svg class="b" style="left:918px;top:544px" width="16" height="8" viewBox="0 0 16 8"><rect x="0.5" y="0.5" width="6.5" height="6.5" rx="1.2" fill="#e8e8e8" stroke="#666" stroke-width="0.8"/><path d="M2 5.5 l3.5 -3.5 M3 2 h2.5 v2.5" stroke="#444" stroke-width="0.7" fill="none"/><rect x="8.5" y="0.5" width="6.5" height="6.5" rx="1.2" fill="#e8e8e8" stroke="#666" stroke-width="0.8"/><path d="M10 2 l3.5 3.5 M13.5 2 l-3.5 3.5" stroke="#222" stroke-width="0.9"/></svg>
<svg class="b" style="left:923.5px;top:555.5px" width="9" height="9"><circle cx="4.5" cy="4.5" r="3.3" fill="#c0c878" stroke="#a0a860" stroke-width="0.6"/></svg>
<div class="b" style="left:935px;top:86px;width:1px;height:453px;background:#d0d0d0;"></div>
<div class="t" style="left:940.3px;top:86.91px;font-size:7.15px;line-height:12px;color:#232627;font-weight:normal;font-family:'Liberation Sans', sans-serif;">Layer Styling</div>
<svg class="b" style="left:1184.5px;top:88.5px" width="16" height="8" viewBox="0 0 16 8"><rect x="0.5" y="0.5" width="6.5" height="6.5" rx="1.2" fill="#e8e8e8" stroke="#666" stroke-width="0.8"/><path d="M2 5.5 l3.5 -3.5 M3 2 h2.5 v2.5" stroke="#444" stroke-width="0.7" fill="none"/><rect x="8.5" y="0.5" width="6.5" height="6.5" rx="1.2" fill="#e8e8e8" stroke="#666" stroke-width="0.8"/><path d="M10 2 l3.5 3.5 M13.5 2 l-3.5 3.5" stroke="#222" stroke-width="0.9"/></svg>
<div class="b" style="left:940.3px;top:100px;width:258.10000000000014px;height:14px;background:#f4f4f4;border:1px solid #bcbebf;border-radius:2px;"></div>
<svg class="b" style="left:942.5px;top:102.5px" width="9" height="9"><rect x="0.5" y="0.5" width="8" height="8" fill="#d8d8d8" stroke="#333" stroke-width="0.8"/><path d="M0.5 4.5 h8 M4.5 0.5 v8 M4.5 4.5 l4 -4" stroke="#333" stroke-width="0.7"/></svg>
<div class="t" style="left:953.7px;top:101.21px;font-size:7.15px;line-height:12px;color:#232627;font-weight:normal;font-family:'Liberation Sans', sans-serif;">example_res_fr</div>
<svg class="b" style="left:1190px;top:105.5px" width="5" height="4"><path d="M0 0 h4 l-2 3z" fill="#555"/></svg>
<svg class="b" style="left:943px;top:120px" width="16" height="15" viewBox="0 0 16 15"><path d="M2 9 l6 -3 l3.5 3.5 l-3 4.5 q-4 0 -6.5 -5z" fill="#9a9a9a" stroke="#777" stroke-width="0.6"/><path d="M9.5 7 l5 -5" stroke="#8a8a8a" stroke-width="1.6"/></svg>
<div class="b" style="left:965.8px;top:117.6px;width:26.200000000000045px;height:19.400000000000006px;background:#fafafa;border:1px solid #bcbebf;border-bottom:none;border-radius:2px 2px 0 0;"></div>
<div class="b" style="left:993.6px;top:119.8px;width:25.899999999999977px;height:16.200000000000003px;background:#e4e4e4;border:1px solid #c4c4c4;border-bottom:none;border-radius:2px 2px 0 0;"></div>
<div class="b" style="left:1020.8px;top:119.8px;width:25.600000000000136px;height:16.200000000000003px;background:#e4e4e4;border:1px solid #c4c4c4;border-bottom:none;border-radius:2px 2px 0 0;"></div>
<div class="b" style="left:1048px;top:119.8px;width:26.5px;height:16.200000000000003px;background:#e4e4e4;border:1px solid #c4c4c4;border-bottom:none;border-radius:2px 2px 0 0;"></div>
<div class="b" style="left:1076px;top:119.8px;width:26.299999999999955px;height:16.200000000000003px;background:#e4e4e4;border:1px solid #c4c4c4;border-bottom:none;border-radius:2px 2px 0 0;"></div>
<svg class="b" style="left:971px;top:120px" width="14" height="14" viewBox="0 0 14 14"><path d="M2.5 12.5 l8.5 -8.5" stroke="#2a2a2a" stroke-width="1.8"/><path d="M8 1.5 l2.5 -0.5 l2.5 2.5 l-1.5 1.5z" fill="#2a2a2a"/><path d="M2 2.5 l1.5 -1 l9 9.5 l-1.5 1.5z" fill="#b8683a" stroke="#7a4020" stroke-width="0.4"/></svg>
<svg class="b" style="left:1000px;top:122px" width="12" height="12" viewBox="0 0 12 12"><defs><linearGradient id="g1" x1="0" y1="0" x2="1" y2="1"><stop offset="0" stop-color="#2a60b8"/><stop offset="0.4" stop-color="#3cb878"/><stop offset="0.7" stop-color="#e0c848"/><stop offset="1" stop-color="#d04a2a"/></linearGradient></defs><rect width="12" height="12" fill="url(#g1)"/></svg>
<svg class="b" style="left:1027px;top:121.5px" width="13" height="13" viewBox="0 0 13 13"><path d="M1.5 1.5 l8 8" stroke="#1a1a1a" stroke-width="1.3"/><path d="M5.5 11 h6 v-6z" fill="#1a1a1a"/></svg>
<svg class="b" style="left:1055px;top:121px" width="12" height="12" viewBox="0 0 12 12"><path d="M1 1 h10 v10 h-10z M3.5 1 v10 M6 1 v10 M8.5 1 v10 M1 3.5 h10 M1 6 h10 M1 8.5 h10" stroke="#111" fill="none" stroke-width="1"/></svg>
<svg class="b" style="left:1082.5px;top:120.5px" width="13" height="13" viewBox="0 0 13 13"><path d="M1 7 l5.5 4 l5.5 -4" stroke="#222" fill="#666" stroke-width="1"/><path d="M6.5 1.5 l5.5 4 l-5.5 4 l-5.5 -4z" fill="#fff" stroke="#222" stroke-width="1.1"/><path d="M4 5.5 l2.5 -1.8 l2.5 1.8" stroke="#888" fill="none" stroke-width="0.6"/></svg>
<div class="b" style="left:963.3px;top:135.5px;width:236.70000000000005px;height:1.0px;background:#cdcdcd;"></div>
<div class="b" style="left:940.3px;top:137.4px;width:23.0px;height:468.6px;background:#626262;"></div>
<svg class="b" style="left:943px;top:140px" width="14" height="14"><path d="M7 1 l6 3 v6 l-6 3 l-6 -3 v-6z" fill="#b8d070"/><path d="M7 1 l6 3 l-6 3 l-6 -3z" fill="#e07070"/></svg>
<svg class="b" style="left:943px;top:159px" width="14" height="14"><rect x="2" y="2" width="10" height="6" fill="#d09050"/><rect x="1" y="8" width="12" height="5" fill="#e8c050"/></svg>
<svg class="b" style="left:943px;top:180px" width="14" height="14"><path d="M3 5 q4 -4 8 0 l-2 1 M11 9 q-4 4 -8 0 l2 -1" stroke="#e0c040" stroke-width="2" fill="none"/></svg>
<div class="b" style="left:965.8px;top:141.5px;width:234.20000000000005px;height:10.5px;background:#f2f2f2;border:1px solid #d4d4d4;"></div>
<div class="t" style="left:966.8px;top:141.21px;font-size:7.15px;line-height:12px;color:#232627;font-weight:normal;font-family:'Liberation Sans', sans-serif;">Groups</div>
<div class="b" style="left:965.4px;top:152px;width:232.80000000000007px;height:108px;background:#fcfcfc;border:1px solid #bcbebf;border-top:none;"></div>
<div class="t" style="left:978px;top:151.71px;font-size:7.15px;line-height:12px;color:#232627;font-weight:normal;font-family:'Liberation Sans', sans-serif;">vitesse</div>
<div class="t" style="left:1012.8px;top:151.71px;font-size:7.15px;line-height:12px;color:#232627;font-weight:normal;font-family:'Liberation Sans', sans-serif;">ms</div>
<div class="t" style="left:978px;top:161.91px;font-size:7.15px;line-height:12px;color:#232627;font-weight:normal;font-family:'Liberation Sans', sans-serif;">hauteur d'eau</div>
<div class="t" style="left:1028px;top:161.91px;font-size:7.15px;line-height:12px;color:#232627;font-weight:normal;font-family:'Liberation Sans', sans-serif;">m</div>
<div class="t" style="left:978px;top:171.81px;font-size:7.15px;line-height:12px;color:#232627;font-weight:normal;font-family:'Liberation Sans', sans-serif;">surface libre</div>
<div class="t" style="left:1023px;top:171.81px;font-size:7.15px;line-height:12px;color:#232627;font-weight:normal;font-family:'Liberation Sans', sans-serif;">m</div>
<div class="t" style="left:978px;top:181.71px;font-size:7.15px;line-height:12px;color:#232627;font-weight:normal;font-family:'Liberation Sans', sans-serif;">fond</div>
<div class="t" style="left:1014.4px;top:181.71px;font-size:7.15px;line-height:12px;color:#232627;font-weight:normal;font-family:'Liberation Sans', sans-serif;">m</div>
<div class="b" style="left:1178px;top:153.0px;width:9px;height:9.0px;background:#c8c8c8;border:1px solid #bbb;"></div>
<div class="b" style="left:1178px;top:163.2px;width:9px;height:9.0px;background:#c8c8c8;border:1px solid #bbb;"></div>
<div class="b" style="left:1178px;top:173.1px;width:9px;height:9.0px;background:#c8c8c8;border:1px solid #bbb;"></div>
<svg class="b" style="left:1178px;top:183px" width="9" height="9" viewBox="0 0 9 9"><defs><linearGradient id="g2" x1="0" y1="0" x2="1" y2="1"><stop offset="0" stop-color="#2a60b8"/><stop offset="0.4" stop-color="#3cb878"/><stop offset="0.7" stop-color="#e0c848"/><stop offset="1" stop-color="#d04a2a"/></linearGradient></defs><rect width="9" height="9" fill="url(#g2)"/></svg>
<svg class="b" style="left:1188px;top:153px" width="10" height="9"><path d="M1 1 l7 6" stroke="#555"/></svg>
<div class="t" style="left:965.4px;top:262.41px;font-size:7.15px;line-height:12px;color:#232627;font-weight:normal;font-family:'Liberation Sans', sans-serif;">Dataset in selected group(s)</div>
<svg class="b" style="left:966.5px;top:279.5px" width="7" height="6"><path d="M0 0.5 h7 l-3.5 5z" fill="#232627"/></svg>
<div class="t" style="left:979px;top:276.61px;font-size:6.85px;line-height:12px;color:#232627;font-weight:bold;font-family:'Liberation Sans', sans-serif;">Dataset group Metadata</div>
<div class="b" style="left:967.2px;top:289.9px;width:230.79999999999995px;height:57.30000000000001px;border:1px solid #d4d4d4;background:#ebebeb;"></div>
<div class="t" style="left:972.7px;top:295.11px;font-size:7.15px;line-height:12px;color:#232627;font-weight:normal;font-family:'Liberation Sans', sans-serif;">Mesh type</div>
<div class="t" style="left:1007.6px;top:295.11px;font-size:7.15px;line-height:12px;color:#232627;font-weight:normal;font-family:'Liberation Sans', sans-serif;">faces</div>
<div class="t" style="left:972.7px;top:306.51px;font-size:7.15px;line-height:12px;color:#232627;font-weight:normal;font-family:'Liberation Sans', sans-serif;">Data type</div>
<div class="t" style="left:1007.6px;top:306.51px;font-size:7.15px;line-height:12px;color:#232627;font-weight:normal;font-family:'Liberation Sans', sans-serif;">vertices</div>
<div class="t" style="left:972.7px;top:317.51px;font-size:7.15px;line-height:12px;color:#232627;font-weight:normal;font-family:'Liberation Sans', sans-serif;">Is vector</div>
<div class="t" style="left:1007.6px;top:317.51px;font-size:7.15px;line-height:12px;color:#232627;font-weight:normal;font-family:'Liberation Sans', sans-serif;">No</div>
<div class="t" style="left:972.7px;top:328.91px;font-size:7.15px;line-height:12px;color:#232627;font-weight:normal;font-family:'Liberation Sans', sans-serif;">name</div>
<div class="t" style="left:1007.6px;top:328.91px;font-size:7.15px;line-height:12px;color:#232627;font-weight:normal;font-family:'Liberation Sans', sans-serif;">fond m</div>
<svg class="b" style="left:966.5px;top:353.5px" width="7" height="6"><path d="M0 0.5 h7 l-3.5 5z" fill="#232627"/></svg>
<div class="t" style="left:979px;top:350.40px;font-size:6.75px;line-height:12px;color:#232627;font-weight:bold;font-family:'Liberation Sans', sans-serif;">Layer Rendering</div>
<div class="b" style="left:967.2px;top:364.4px;width:230.79999999999995px;height:24.600000000000023px;border:1px solid #d4d4d4;background:#ebebeb;"></div>
<div class="t" style="left:971.6px;top:370.41px;font-size:7.15px;line-height:12px;color:#232627;font-weight:normal;font-family:'Liberation Sans', sans-serif;">Blending mode</div>
<div class="b" style="left:1083.6px;top:368.8px;width:109.10000000000014px;height:14.699999999999989px;background:#f4f4f4;border:1px solid #bcbebf;border-radius:2px;"></div>
<div class="t" style="left:1087px;top:370.41px;font-size:7.15px;line-height:12px;color:#232627;font-weight:normal;font-family:'Liberation Sans', sans-serif;">Normal</div>
<svg class="b" style="left:1183px;top:375px" width="5" height="4"><path d="M0 0 h4 l-2 3z" fill="#555"/></svg>
<div class="b" style="left:965.6px;top:593.5px;width:12.5px;height:12.5px;background:#e8e8e8;border:1px solid #c0c0c0;border-radius:2px;"></div>
<div class="b" style="left:982.7px;top:593.5px;width:12.5px;height:12.5px;background:#e8e8e8;border:1px solid #c0c0c0;border-radius:2px;"></div>
<svg class="b" style="left:967.5px;top:595.5px" width="9" height="9" viewBox="0 0 9 9"><path d="M2.5 2 v3 h3" stroke="#c06030" stroke-width="1.2" fill="none"/><path d="M2.5 5 q2 -3 4.5 -1 q1.5 2 -1 4" stroke="#c06030" stroke-width="1.2" fill="none"/></svg>
<svg class="b" style="left:984.5px;top:595.5px" width="9" height="9" viewBox="0 0 9 9"><path d="M6.5 2 v3 h-3" stroke="#777" stroke-width="1.2" fill="none"/><path d="M6.5 5 q-2 -3 -4.5 -1 q-1.5 2 1 4" stroke="#777" stroke-width="1.2" fill="none"/></svg>
<div class="b" style="left:1094.5px;top:596px;width:6.5px;height:6.5px;background:#f4f4f4;border:1px solid #c4c4c4;"></div>
<svg class="b" style="left:1094.5px;top:596px" width="7" height="7"><path d="M1.5 3.5 l1.5 2 l3 -5" stroke="#222" fill="none"/></svg>
<div class="t" style="left:1103.9px;top:593.61px;font-size:7.15px;line-height:12px;color:#232627;font-weight:normal;font-family:'Liberation Sans', sans-serif;">Live update</div>
<div class="b" style="left:1149px;top:592.8px;width:49.40000000000009px;height:13.900000000000091px;background:#f0f0f0;border:1px solid #bcbebf;border-radius:2px;"></div>
<svg class="b" style="left:1153px;top:594px" width="10" height="11"><path d="M1 6 l3 4 l5 -9" stroke="#222" stroke-width="1.6" fill="none"/></svg>
<div class="t" style="left:1162.5px;top:594.02px;font-size:7.2px;line-height:12px;color:#232627;font-weight:normal;font-family:'Liberation Sans', sans-serif;"><u>A</u>ppliquer</div>
<div class="b" style="left:2.4px;top:611px;width:127.19999999999999px;height:13.600000000000023px;background:#fcfcfc;border:1px solid #bcbebf;border-radius:2px;"></div>
<svg class="b" style="left:6px;top:614px" width="8" height="8"><circle cx="3.2" cy="3.2" r="2.4" fill="none" stroke="#555"/><path d="M5 5 l2.5 2.5" stroke="#555"/></svg>
<div class="t" style="left:17.6px;top:612.21px;font-size:7.15px;line-height:12px;color:#8a8a8a;font-weight:normal;font-family:'Liberation Sans', sans-serif;">Type to locate (Ctrl+K)</div>
<div class="t" style="left:746px;top:612.18px;font-size:5.95px;line-height:12px;color:#232627;font-weight:normal;font-family:'Liberation Sans', sans-serif;">Coordinate</div>
<div class="b" style="left:777.6px;top:611.4px;width:34.799999999999955px;height:13.200000000000045px;background:#fcfcfc;border:1px solid #bcbebf;"></div>
<div class="t" style="left:780px;top:612.18px;font-size:5.95px;line-height:12px;color:#232627;font-weight:normal;font-family:'Liberation Sans', sans-serif;">4029,7809</div>
<svg class="b" style="left:815px;top:612px" width="9" height="10"><circle cx="3" cy="3" r="2.5" fill="none" stroke="#333"/><circle cx="6" cy="7" r="2.5" fill="none" stroke="#333"/></svg>
<div class="t" style="left:832px;top:612.18px;font-size:5.95px;line-height:12px;color:#232627;font-weight:normal;font-family:'Liberation Sans', sans-serif;">Scale</div>
<div class="b" style="left:848.4px;top:611.4px;width:47.60000000000002px;height:13.200000000000045px;background:#f4f4f4;border:1px solid #bcbebf;border-radius:1px;"></div>
<div class="t" style="left:850.5px;top:612.18px;font-size:5.95px;line-height:12px;color:#232627;font-weight:normal;font-family:'Liberation Sans', sans-serif;">1:179257328</div>
<svg class="b" style="left:888px;top:617px" width="5" height="4"><path d="M0 0 h4 l-2 3z" fill="#555"/></svg>
<svg class="b" style="left:903px;top:612px" width="8" height="10"><rect x="1" y="4" width="6" height="5" fill="#333"/><path d="M2 4 v-1.5 a2 2 0 0 1 4 0 v1.5" stroke="#333" fill="none"/></svg>
<div class="t" style="left:915.6px;top:612.18px;font-size:5.95px;line-height:12px;color:#232627;font-weight:normal;font-family:'Liberation Sans', sans-serif;">Magnifier</div>
<div class="b" style="left:943px;top:611.4px;width:53px;height:13.200000000000045px;background:#fcfcfc;border:1px solid #bcbebf;"></div>
<div class="t" style="left:946px;top:612.18px;font-size:5.95px;line-height:12px;color:#232627;font-weight:normal;font-family:'Liberation Sans', sans-serif;">100%</div>
<div class="b" style="left:989px;top:612px;width:7px;height:12px;border-left:1px solid #ddd;"></div>
<svg class="b" style="left:990px;top:612px" width="6" height="12" viewBox="0 0 6 12"><path d="M1 4.5 l2 -2.5 l2 2.5z M1 7.5 l2 2.5 l2 -2.5z" fill="#444"/></svg>
<div class="t" style="left:1002.5px;top:612.18px;font-size:5.95px;line-height:12px;color:#232627;font-weight:normal;font-family:'Liberation Sans', sans-serif;">Rotation</div>
<div class="b" style="left:1030.5px;top:611.4px;width:51.0px;height:13.200000000000045px;background:#fcfcfc;border:1px solid #bcbebf;"></div>
<div class="t" style="left:1033.5px;top:612.18px;font-size:5.95px;line-height:12px;color:#232627;font-weight:normal;font-family:'Liberation Sans', sans-serif;">0.0 °</div>
<div class="b" style="left:1074px;top:612px;width:7px;height:12px;border-left:1px solid #ddd;"></div>
<svg class="b" style="left:1075px;top:612px" width="6" height="12" viewBox="0 0 6 12"><path d="M1 4.5 l2 -2.5 l2 2.5z M1 7.5 l2 2.5 l2 -2.5z" fill="#444"/></svg>
<div class="b" style="left:1086px;top:614.5px;width:6px;height:6.0px;background:#f4f4f4;border:1px solid #c4c4c4;"></div>
<svg class="b" style="left:1086px;top:614px" width="7" height="7"><path d="M1.5 3.5 l1.5 2 l3 -5" stroke="#222" fill="none"/></svg>
<div class="t" style="left:1094.6px;top:612.18px;font-size:5.95px;line-height:12px;color:#232627;font-weight:normal;font-family:'Liberation Sans', sans-serif;">Render</div>
<svg class="b" style="left:1123.5px;top:614px" width="8" height="8"><circle cx="4" cy="4" r="3.5" fill="none" stroke="#333"/><path d="M0.5 4 h7 M4 0.5 v7" stroke="#333" stroke-width="0.6"/></svg>
<div class="t" style="left:1133.3px;top:612.16px;font-size:5.3px;line-height:12px;color:#232627;font-weight:normal;font-family:'Liberation Sans', sans-serif;">EPSG:4326</div>
<svg class="b" style="left:1173px;top:613px" width="10" height="9"><ellipse cx="5" cy="4" rx="4.5" ry="3.5" fill="#333"/><path d="M3 7 l-1 2 l3 -2" fill="#333"/></svg>
</div>
<div class="b" style="left:0px;top:0px;width:1200px;height:626px;background:rgba(0,0,0,0.40);"></div>
<div class="b" style="left:308px;top:0px;width:571px;height:553px;background:#eff0f1;box-shadow:0 8px 28px 0px rgba(0,0,0,0.55);"></div>
<div class="b" style="left:308px;top:0px;width:571px;height:12.7px;background:linear-gradient(#5c6269,#4b5359);border-bottom:1px solid #3d4347;"></div>
<div class="b" style="left:308px;top:12.7px;width:571px;height:1.3000000000000007px;background:#f8f9f9;"></div>
<svg class="b" style="left:312px;top:0px" width="10" height="10"><circle cx="4.8" cy="4.5" r="3.4" fill="none" stroke="#8cc63f" stroke-width="1.6"/><path d="M6.5 6.5 l2.5 2.5" stroke="#8cc63f" stroke-width="1.8"/><circle cx="4.8" cy="4.5" r="1.3" fill="#f0c040"/></svg>
<div class="t" style="left:308px;width:571px;text-align:center;top:-0.59px;font-size:7.15px;line-height:12px;color:#fcfcfc;font-weight:normal;">Mesh calculator</div>
<svg class="b" style="left:840px;top:0px" width="40" height="12"><path d="M3.5 3.5 l3 3 l3 -3" stroke="#dfe1e3" fill="none" stroke-width="1"/><path d="M15.5 6.5 l3 -3 l3 3" stroke="#dfe1e3" fill="none" stroke-width="1"/><circle cx="31.7" cy="5" r="4.8" fill="#f2f3f4"/><path d="M29.7 3 l4 4 M33.7 3 l-4 4" stroke="#475057" stroke-width="1"/></svg>
<div class="t" style="left:315px;top:19.20px;font-size:6.6px;line-height:12px;color:#31363b;font-weight:bold;font-family:'Liberation Sans', sans-serif;">Datasets</div>
<div class="b" style="left:315.2px;top:31px;width:265.8px;height:249px;border:1px solid #dcdddf;border-radius:2px;background:#ebeced;"></div>
<div class="b" style="left:320px;top:37px;width:255.5px;height:237.5px;background:#fcfcfc;border:1px solid #bcbebf;"></div>
<div class="b" style="left:320.8px;top:47.9px;width:253.99999999999994px;height:8.600000000000001px;background:#c5dcf0;"></div>
<div class="t" style="left:323px;top:36.71px;font-size:7.15px;line-height:12px;color:#31363b;font-weight:normal;font-family:'Liberation Sans', sans-serif;">vitesse</div>
<div class="t" style="left:357.4px;top:36.71px;font-size:7.15px;line-height:12px;color:#31363b;font-weight:normal;font-family:'Liberation Sans', sans-serif;">ms</div>
<div class="t" style="left:323px;top:46.71px;font-size:7.15px;line-height:12px;color:#31363b;font-weight:normal;font-family:'Liberation Sans', sans-serif;">hauteur d'eau</div>
<div class="t" style="left:373px;top:46.71px;font-size:7.15px;line-height:12px;color:#31363b;font-weight:normal;font-family:'Liberation Sans', sans-serif;">m</div>
<div class="t" style="left:323px;top:56.51px;font-size:7.15px;line-height:12px;color:#31363b;font-weight:normal;font-family:'Liberation Sans', sans-serif;">surface libre</div>
<div class="t" style="left:368px;top:56.51px;font-size:7.15px;line-height:12px;color:#31363b;font-weight:normal;font-family:'Liberation Sans', sans-serif;">m</div>
<div class="t" style="left:323px;top:66.51px;font-size:7.15px;line-height:12px;color:#31363b;font-weight:normal;font-family:'Liberation Sans', sans-serif;">fond</div>
<div class="t" style="left:359px;top:66.51px;font-size:7.15px;line-height:12px;color:#31363b;font-weight:normal;font-family:'Liberation Sans', sans-serif;">m</div>
<div class="t" style="left:585px;top:19.20px;font-size:6.6px;line-height:12px;color:#31363b;font-weight:bold;font-family:'Liberation Sans', sans-serif;">Result Layer</div>
<div class="b" style="left:582px;top:31px;width:291px;height:249px;border:1px solid #dcdddf;border-radius:2px;background:#ebeced;"></div>
<div class="t" style="left:590px;top:38.31px;font-size:7.15px;line-height:12px;color:#31363b;font-weight:normal;font-family:'Liberation Sans', sans-serif;">Output Dataset</div>
<div class="t" style="left:590px;top:55.61px;font-size:7.15px;line-height:12px;color:#31363b;font-weight:normal;font-family:'Liberation Sans', sans-serif;">Output File</div>
<div class="t" style="left:590px;top:73.61px;font-size:7.15px;line-height:12px;color:#31363b;font-weight:normal;font-family:'Liberation Sans', sans-serif;">Output Format</div>
<div class="t" style="left:590px;top:91.71px;font-size:7.15px;line-height:12px;color:#31363b;font-weight:normal;font-family:'Liberation Sans', sans-serif;">Group Name</div>
<div class="b" style="left:683.5px;top:41px;width:6.5px;height:6.5px;background:#fcfcfc;border:1px solid #b0b2b4;border-radius:50%;"></div>
<div class="t" style="left:693px;top:38.31px;font-size:7.15px;line-height:12px;color:#31363b;font-weight:normal;font-family:'Liberation Sans', sans-serif;">On File</div>
<div class="b" style="left:777px;top:41px;width:6.5px;height:6.5px;background:#fcfcfc;border:1px solid #b0b2b4;border-radius:50%;"></div>
<div class="b" style="left:778.9px;top:42.9px;width:2.7000000000000455px;height:2.700000000000003px;background:#31363b;border-radius:50%;"></div>
<div class="t" style="left:787px;top:38.31px;font-size:7.15px;line-height:12px;color:#31363b;font-weight:normal;font-family:'Liberation Sans', sans-serif;">Virtual</div>
<div class="b" style="left:683.2px;top:54px;width:166.29999999999995px;height:14.5px;background:#e6e7e8;border:1px solid #bcbebf;border-radius:2px;"></div>
<div class="b" style="left:853px;top:54px;width:13.799999999999955px;height:14.5px;background:#eeeff0;border:1px solid #c8cacc;border-radius:2px;"></div>
<div class="t" style="left:853px;width:13.799999999999955px;text-align:center;top:56.18px;font-size:6px;line-height:12px;color:#9a9c9e;font-weight:normal;">...</div>
<div class="b" style="left:683.2px;top:72.3px;width:183.5999999999999px;height:14.0px;background:linear-gradient(#f3f4f5,#eaebec);border:1px solid #c8cacc;border-radius:2px;"></div>
<div class="t" style="left:686.5px;top:73.61px;font-size:7.15px;line-height:12px;color:#a8aaac;font-weight:normal;font-family:'Liberation Sans', sans-serif;">Selafin File</div>
<svg class="b" style="left:859px;top:78.6px" width="5" height="4"><path d="M0.5 0.5 h3 l-1.5 2z" fill="#a8aaac"/></svg>
<div class="b" style="left:683.2px;top:90.6px;width:183.5999999999999px;height:13.800000000000011px;background:#fcfcfc;border:1px solid #9fd1ec;border-radius:2px;"></div>
<div class="t" style="left:685.5px;top:91.71px;font-size:7.15px;line-height:12px;color:#31363b;font-weight:normal;font-family:'Liberation Sans', sans-serif;">unit flow</div>
<div class="b" style="left:594.8px;top:115.8px;width:6.7000000000000455px;height:6.700000000000003px;background:#fcfcfc;border:1px solid #b0b2b4;border-radius:1px;"></div>
<svg class="b" style="left:594.5px;top:115.5px" width="8" height="8"><path d="M2 4 l1.6 2.4 l2.8 -5" stroke="#31363b" fill="none" stroke-width="0.9"/></svg>
<div class="t" style="left:604px;top:113.51px;font-size:7.15px;line-height:12px;color:#31363b;font-weight:normal;font-family:'Liberation Sans', sans-serif;">Current Extent</div>
<div class="b" style="left:730.8px;top:115.8px;width:6.7000000000000455px;height:6.700000000000003px;background:#fcfcfc;border:1px solid #b0b2b4;border-radius:1px;"></div>
<div class="t" style="left:739.5px;top:113.51px;font-size:7.15px;line-height:12px;color:#31363b;font-weight:normal;font-family:'Liberation Sans', sans-serif;">Mask Layer</div>
<div class="b" style="left:594.6px;top:139px;width:131.79999999999995px;height:13.199999999999989px;background:linear-gradient(#f6f7f7,#ecedee);border:1px solid #bfc1c3;border-radius:2px;box-shadow:0 1px 0 rgba(0,0,0,0.06);"></div>
<div class="t" style="left:594.6px;width:131.79999999999995px;text-align:center;top:140.01px;font-size:7.15px;line-height:12px;color:#31363b;font-weight:normal;">Selected Layer Extent</div>
<div class="t" style="left:594.6px;top:156.71px;font-size:7.15px;line-height:12px;color:#31363b;font-weight:normal;font-family:'Liberation Sans', sans-serif;">X min</div>
<div class="b" style="left:652.8px;top:156.3px;width:73.60000000000002px;height:12.199999999999989px;background:#fcfcfc;border:1px solid #bcbebf;border-radius:2px;"></div>
<div class="b" style="left:719.4px;top:157.3px;width:1.0px;height:10.199999999999989px;background:#e0e1e2;"></div>
<svg class="b" style="left:720.4px;top:157.4px" width="5" height="10"><path d="M0.8 3.8 l1.7 -2 l1.7 2z M0.8 6.2 l1.7 2 l1.7 -2z" fill="#555"/></svg>
<div class="t" style="left:655.8px;top:156.61px;font-size:7.15px;line-height:12px;color:#31363b;font-weight:normal;font-family:'Liberation Sans', sans-serif;">536.47162</div>
<div class="t" style="left:730px;top:156.71px;font-size:7.15px;line-height:12px;color:#31363b;font-weight:normal;font-family:'Liberation Sans', sans-serif;">X max</div>
<div class="b" style="left:788.3px;top:156.3px;width:74.10000000000002px;height:12.199999999999989px;background:#fcfcfc;border:1px solid #bcbebf;border-radius:2px;"></div>
<div class="b" style="left:855.4px;top:157.3px;width:1.0px;height:10.199999999999989px;background:#e0e1e2;"></div>
<svg class="b" style="left:856.4px;top:157.4px" width="5" height="10"><path d="M0.8 3.8 l1.7 -2 l1.7 2z M0.8 6.2 l1.7 2 l1.7 -2z" fill="#555"/></svg>
<div class="t" style="left:791.3px;top:156.61px;font-size:7.15px;line-height:12px;color:#31363b;font-weight:normal;font-family:'Liberation Sans', sans-serif;">17763.07031</div>
<div class="t" style="left:594.6px;top:173.21px;font-size:7.15px;line-height:12px;color:#31363b;font-weight:normal;font-family:'Liberation Sans', sans-serif;">Y min</div>
<div class="b" style="left:652.8px;top:173.4px;width:73.60000000000002px;height:12.0px;background:#fcfcfc;border:1px solid #bcbebf;border-radius:2px;"></div>
<div class="b" style="left:719.4px;top:174.4px;width:1.0px;height:10.0px;background:#e0e1e2;"></div>
<svg class="b" style="left:720.4px;top:174.4px" width="5" height="10"><path d="M0.8 3.8 l1.7 -2 l1.7 2z M0.8 6.2 l1.7 2 l1.7 -2z" fill="#555"/></svg>
<div class="t" style="left:655.8px;top:173.61px;font-size:7.15px;line-height:12px;color:#31363b;font-weight:normal;font-family:'Liberation Sans', sans-serif;">-2343.54004</div>
<div class="t" style="left:730px;top:173.21px;font-size:7.15px;line-height:12px;color:#31363b;font-weight:normal;font-family:'Liberation Sans', sans-serif;">Y max</div>
<div class="b" style="left:788.3px;top:173.4px;width:74.10000000000002px;height:12.0px;background:#fcfcfc;border:1px solid #bcbebf;border-radius:2px;"></div>
<div class="b" style="left:855.4px;top:174.4px;width:1.0px;height:10.0px;background:#e0e1e2;"></div>
<svg class="b" style="left:856.4px;top:174.4px" width="5" height="10"><path d="M0.8 3.8 l1.7 -2 l1.7 2z M0.8 6.2 l1.7 2 l1.7 -2z" fill="#555"/></svg>
<div class="t" style="left:791.3px;top:173.61px;font-size:7.15px;line-height:12px;color:#31363b;font-weight:normal;font-family:'Liberation Sans', sans-serif;">6837.79004</div>
<div class="b" style="left:590.2px;top:226.3px;width:90.19999999999993px;height:14.099999999999994px;background:linear-gradient(#f6f7f7,#ecedee);border:1px solid #bfc1c3;border-radius:2px;box-shadow:0 1px 0 rgba(0,0,0,0.06);"></div>
<div class="t" style="left:590.2px;width:90.19999999999993px;text-align:center;top:227.61px;font-size:7.0px;line-height:12px;color:#31363b;font-weight:normal;">All Selected Dataset Times</div>
<div class="t" style="left:590.2px;top:245.31px;font-size:7.15px;line-height:12px;color:#31363b;font-weight:normal;font-family:'Liberation Sans', sans-serif;">Start time</div>
<div class="b" style="left:625.5px;top:243.7px;width:77.89999999999998px;height:14.600000000000023px;background:linear-gradient(#f6f7f7,#ecedee);border:1px solid #bfc1c3;border-radius:2px;"></div>
<div class="t" style="left:628.0px;top:245.21px;font-size:6.95px;line-height:12px;color:#31363b;font-weight:normal;font-family:'Liberation Sans', sans-serif;">01.01.1900 00:00:00</div>
<svg class="b" style="left:695.4px;top:249.5px" width="5" height="4"><path d="M0 0 h4 l-2 3z" fill="#555"/></svg>
<div class="t" style="left:756.3px;top:245.31px;font-size:7.15px;line-height:12px;color:#31363b;font-weight:normal;font-family:'Liberation Sans', sans-serif;">End time</div>
<div class="b" style="left:788.3px;top:243.7px;width:78.40000000000009px;height:14.600000000000023px;background:linear-gradient(#f6f7f7,#ecedee);border:1px solid #bfc1c3;border-radius:2px;"></div>
<div class="t" style="left:790.8px;top:245.21px;font-size:6.95px;line-height:12px;color:#31363b;font-weight:normal;font-family:'Liberation Sans', sans-serif;">01.01.1900 01:06:40</div>
<svg class="b" style="left:858.7px;top:249.5px" width="5" height="4"><path d="M0 0 h4 l-2 3z" fill="#555"/></svg>
<div class="t" style="left:315px;top:283.80px;font-size:6.6px;line-height:12px;color:#31363b;font-weight:bold;font-family:'Liberation Sans', sans-serif;">Mesh Calculator Expression</div>
<div class="b" style="left:315.5px;top:296.4px;width:556.5px;height:109.60000000000002px;border:1px solid #dcdddf;border-radius:2px;background:#ebeced;"></div>
<svg class="b" style="left:317.5px;top:303.5px" width="8" height="6"><path d="M0.5 0.5 h7 l-3.5 5z" fill="#232627"/></svg>
<div class="t" style="left:330px;top:300.90px;font-size:6.6px;line-height:12px;color:#31363b;font-weight:bold;font-family:'Liberation Sans', sans-serif;">Operators</div>
<div class="b" style="left:316.5px;top:314.5px;width:555.5px;height:74.5px;border-top:1px solid #dcdddf;"></div>
<div class="b" style="left:318px;top:319.3px;width:89px;height:14.199999999999989px;background:linear-gradient(#f6f7f7,#ecedee);border:1px solid #bfc1c3;border-radius:2px;box-shadow:0 1px 0 rgba(0,0,0,0.06);"></div>
<div class="t" style="left:318px;width:89px;text-align:center;top:320.81px;font-size:7.15px;line-height:12px;color:#31363b;font-weight:normal;">+</div>
<div class="b" style="left:410.3px;top:319.3px;width:89.0px;height:14.199999999999989px;background:linear-gradient(#f6f7f7,#ecedee);border:1px solid #bfc1c3;border-radius:2px;box-shadow:0 1px 0 rgba(0,0,0,0.06);"></div>
<div class="t" style="left:410.3px;width:89.0px;text-align:center;top:320.81px;font-size:7.15px;line-height:12px;color:#31363b;font-weight:normal;">*</div>
<div class="b" style="left:502.8px;top:319.3px;width:88.99999999999994px;height:14.199999999999989px;background:linear-gradient(#f6f7f7,#ecedee);border:1px solid #bfc1c3;border-radius:2px;box-shadow:0 1px 0 rgba(0,0,0,0.06);"></div>
<div class="t" style="left:502.8px;width:88.99999999999994px;text-align:center;top:320.81px;font-size:7.15px;line-height:12px;color:#31363b;font-weight:normal;">(</div>
<div class="b" style="left:595.3px;top:319.3px;width:89.0px;height:14.199999999999989px;background:linear-gradient(#f6f7f7,#ecedee);border:1px solid #bfc1c3;border-radius:2px;box-shadow:0 1px 0 rgba(0,0,0,0.06);"></div>
<div class="t" style="left:595.3px;width:89.0px;text-align:center;top:320.81px;font-size:7.15px;line-height:12px;color:#31363b;font-weight:normal;">min</div>
<div class="b" style="left:687.8px;top:319.3px;width:89.0px;height:14.199999999999989px;background:linear-gradient(#f6f7f7,#ecedee);border:1px solid #bfc1c3;border-radius:2px;box-shadow:0 1px 0 rgba(0,0,0,0.06);"></div>
<div class="t" style="left:687.8px;width:89.0px;text-align:center;top:320.81px;font-size:7.15px;line-height:12px;color:#31363b;font-weight:normal;">IF</div>
<div class="b" style="left:780.3px;top:319.3px;width:89.0px;height:14.199999999999989px;background:linear-gradient(#f6f7f7,#ecedee);border:1px solid #bfc1c3;border-radius:2px;box-shadow:0 1px 0 rgba(0,0,0,0.06);"></div>
<div class="t" style="left:780.3px;width:89.0px;text-align:center;top:320.81px;font-size:7.15px;line-height:12px;color:#31363b;font-weight:normal;">sum (aggr)</div>
<div class="b" style="left:318px;top:337px;width:89px;height:13.800000000000011px;background:linear-gradient(#f6f7f7,#ecedee);border:1px solid #bfc1c3;border-radius:2px;box-shadow:0 1px 0 rgba(0,0,0,0.06);"></div>
<div class="t" style="left:318px;width:89px;text-align:center;top:338.31px;font-size:7.15px;line-height:12px;color:#31363b;font-weight:normal;">-</div>
<div class="b" style="left:410.3px;top:337px;width:89.0px;height:13.800000000000011px;background:linear-gradient(#f6f7f7,#ecedee);border:1px solid #bfc1c3;border-radius:2px;box-shadow:0 1px 0 rgba(0,0,0,0.06);"></div>
<div class="t" style="left:410.3px;width:89.0px;text-align:center;top:338.31px;font-size:7.15px;line-height:12px;color:#31363b;font-weight:normal;">/</div>
<div class="b" style="left:502.8px;top:337px;width:88.99999999999994px;height:13.800000000000011px;background:linear-gradient(#f6f7f7,#ecedee);border:1px solid #bfc1c3;border-radius:2px;box-shadow:0 1px 0 rgba(0,0,0,0.06);"></div>
<div class="t" style="left:502.8px;width:88.99999999999994px;text-align:center;top:338.31px;font-size:7.15px;line-height:12px;color:#31363b;font-weight:normal;">)</div>
<div class="b" style="left:595.3px;top:337px;width:89.0px;height:13.800000000000011px;background:linear-gradient(#f6f7f7,#ecedee);border:1px solid #bfc1c3;border-radius:2px;box-shadow:0 1px 0 rgba(0,0,0,0.06);"></div>
<div class="t" style="left:595.3px;width:89.0px;text-align:center;top:338.31px;font-size:7.15px;line-height:12px;color:#31363b;font-weight:normal;">max</div>
<div class="b" style="left:687.8px;top:337px;width:89.0px;height:13.800000000000011px;background:linear-gradient(#f6f7f7,#ecedee);border:1px solid #bfc1c3;border-radius:2px;box-shadow:0 1px 0 rgba(0,0,0,0.06);"></div>
<div class="t" style="left:687.8px;width:89.0px;text-align:center;top:338.31px;font-size:7.15px;line-height:12px;color:#31363b;font-weight:normal;">AND</div>
<div class="b" style="left:780.3px;top:337px;width:89.0px;height:13.800000000000011px;background:linear-gradient(#f6f7f7,#ecedee);border:1px solid #bfc1c3;border-radius:2px;box-shadow:0 1px 0 rgba(0,0,0,0.06);"></div>
<div class="t" style="left:780.3px;width:89.0px;text-align:center;top:338.31px;font-size:7.15px;line-height:12px;color:#31363b;font-weight:normal;">max (aggr)</div>
<div class="b" style="left:318px;top:354.5px;width:89px;height:13.800000000000011px;background:linear-gradient(#f6f7f7,#ecedee);border:1px solid #bfc1c3;border-radius:2px;box-shadow:0 1px 0 rgba(0,0,0,0.06);"></div>
<div class="t" style="left:318px;width:89px;text-align:center;top:355.81px;font-size:7.15px;line-height:12px;color:#31363b;font-weight:normal;">&lt;</div>
<div class="b" style="left:410.3px;top:354.5px;width:89.0px;height:13.800000000000011px;background:linear-gradient(#f6f7f7,#ecedee);border:1px solid #bfc1c3;border-radius:2px;box-shadow:0 1px 0 rgba(0,0,0,0.06);"></div>
<div class="t" style="left:410.3px;width:89.0px;text-align:center;top:355.81px;font-size:7.15px;line-height:12px;color:#31363b;font-weight:normal;">&gt;</div>
<div class="b" style="left:502.8px;top:354.5px;width:88.99999999999994px;height:13.800000000000011px;background:linear-gradient(#f6f7f7,#ecedee);border:1px solid #bfc1c3;border-radius:2px;box-shadow:0 1px 0 rgba(0,0,0,0.06);"></div>
<div class="t" style="left:502.8px;width:88.99999999999994px;text-align:center;top:355.81px;font-size:7.15px;line-height:12px;color:#31363b;font-weight:normal;">=</div>
<div class="b" style="left:595.3px;top:354.5px;width:89.0px;height:13.800000000000011px;background:linear-gradient(#f6f7f7,#ecedee);border:1px solid #bfc1c3;border-radius:2px;box-shadow:0 1px 0 rgba(0,0,0,0.06);"></div>
<div class="t" style="left:595.3px;width:89.0px;text-align:center;top:355.81px;font-size:7.15px;line-height:12px;color:#31363b;font-weight:normal;">abs</div>
<div class="b" style="left:687.8px;top:354.5px;width:89.0px;height:13.800000000000011px;background:linear-gradient(#f6f7f7,#ecedee);border:1px solid #bfc1c3;border-radius:2px;box-shadow:0 1px 0 rgba(0,0,0,0.06);"></div>
<div class="t" style="left:687.8px;width:89.0px;text-align:center;top:355.81px;font-size:7.15px;line-height:12px;color:#31363b;font-weight:normal;">OR</div>
<div class="b" style="left:780.3px;top:354.5px;width:89.0px;height:13.800000000000011px;background:linear-gradient(#f6f7f7,#ecedee);border:1px solid #bfc1c3;border-radius:2px;box-shadow:0 1px 0 rgba(0,0,0,0.06);"></div>
<div class="t" style="left:780.3px;width:89.0px;text-align:center;top:355.81px;font-size:7.15px;line-height:12px;color:#31363b;font-weight:normal;">min (aggr)</div>
<div class="b" style="left:318px;top:372px;width:89px;height:13.800000000000011px;background:linear-gradient(#f6f7f7,#ecedee);border:1px solid #bfc1c3;border-radius:2px;box-shadow:0 1px 0 rgba(0,0,0,0.06);"></div>
<div class="t" style="left:318px;width:89px;text-align:center;top:373.31px;font-size:7.15px;line-height:12px;color:#31363b;font-weight:normal;">&lt;=</div>
<div class="b" style="left:410.3px;top:372px;width:89.0px;height:13.800000000000011px;background:linear-gradient(#f6f7f7,#ecedee);border:1px solid #bfc1c3;border-radius:2px;box-shadow:0 1px 0 rgba(0,0,0,0.06);"></div>
<div class="t" style="left:410.3px;width:89.0px;text-align:center;top:373.31px;font-size:7.15px;line-height:12px;color:#31363b;font-weight:normal;">&gt;=</div>
<div class="b" style="left:502.8px;top:372px;width:88.99999999999994px;height:13.800000000000011px;background:linear-gradient(#f6f7f7,#ecedee);border:1px solid #bfc1c3;border-radius:2px;box-shadow:0 1px 0 rgba(0,0,0,0.06);"></div>
<div class="t" style="left:502.8px;width:88.99999999999994px;text-align:center;top:373.31px;font-size:7.15px;line-height:12px;color:#31363b;font-weight:normal;">!=</div>
<div class="b" style="left:595.3px;top:372px;width:89.0px;height:13.800000000000011px;background:linear-gradient(#f6f7f7,#ecedee);border:1px solid #bfc1c3;border-radius:2px;box-shadow:0 1px 0 rgba(0,0,0,0.06);"></div>
<div class="t" style="left:595.3px;width:89.0px;text-align:center;top:373.31px;font-size:7.15px;line-height:12px;color:#31363b;font-weight:normal;">^</div>
<div class="b" style="left:687.8px;top:372px;width:89.0px;height:13.800000000000011px;background:linear-gradient(#f6f7f7,#ecedee);border:1px solid #bfc1c3;border-radius:2px;box-shadow:0 1px 0 rgba(0,0,0,0.06);"></div>
<div class="t" style="left:687.8px;width:89.0px;text-align:center;top:373.31px;font-size:7.15px;line-height:12px;color:#31363b;font-weight:normal;">NOT</div>
<div class="b" style="left:780.3px;top:372px;width:89.0px;height:13.800000000000011px;background:linear-gradient(#f6f7f7,#ecedee);border:1px solid #bfc1c3;border-radius:2px;box-shadow:0 1px 0 rgba(0,0,0,0.06);"></div>
<div class="t" style="left:780.3px;width:89.0px;text-align:center;top:373.31px;font-size:7.15px;line-height:12px;color:#31363b;font-weight:normal;">average (aggr)</div>
<div class="b" style="left:316.7px;top:391.3px;width:554.5999999999999px;height:13.899999999999977px;background:linear-gradient(#f6f7f7,#ecedee);border:1px solid #bfc1c3;border-radius:2px;box-shadow:0 1px 0 rgba(0,0,0,0.06);"></div>
<div class="t" style="left:316.7px;width:554.8px;text-align:center;top:392.61px;font-size:7.15px;line-height:12px;color:#31363b;font-weight:normal;">NODATA</div>
<div class="b" style="left:316.2px;top:408.7px;width:555.5999999999999px;height:105.90000000000003px;background:#fcfcfc;border:1px solid #bcbebf;border-radius:1px;"></div>
<div class="t" style="left:323.2px;top:410.33px;font-size:7.6px;line-height:12px;color:#26292c;font-weight:normal;font-family:'Liberation Mono', monospace;transform:scaleX(0.822);transform-origin:0 0;">"vitesse       ms"  *  "hauteur d'eau   m"</div>
<div class="t" style="left:314px;top:518.81px;font-size:7.15px;line-height:12px;color:#31363b;font-weight:normal;font-family:'Liberation Sans', sans-serif;">Expression valid</div>
<div class="b" style="left:770px;top:533px;width:49.799999999999955px;height:14.5px;background:linear-gradient(#f8f9f9,#eef0f1);border:1px solid #93cdee;border-radius:2px;"></div>
<svg class="b" style="left:785px;top:535.5px" width="9" height="8"><path d="M1 5 l4 -4 h3 v3 l-4 4z" fill="#5a6a50"/></svg>
<div class="t" style="left:794.5px;top:534.71px;font-size:7.15px;line-height:12px;color:#31363b;font-weight:normal;font-family:'Liberation Sans', sans-serif;"><u>O</u>k</div>
<svg class="b" style="left:800px;top:539px" width="8" height="12"><path d="M1 1 v9 l2 -2 l2 3 l1.5 -1 l-2 -3 h3z" fill="#3b3b3b" stroke="#eee" stroke-width="0.6"/></svg>
<div class="b" style="left:823.4px;top:533px;width:50.10000000000002px;height:14.5px;background:linear-gradient(#f6f7f7,#ecedee);border:1px solid #bfc1c3;border-radius:2px;"></div>
<svg class="b" style="left:831px;top:536px" width="8" height="9"><path d="M1 1 l6 7 M7 1 l-6 7" stroke="#b03a3a" stroke-width="1.8"/></svg>
<div class="t" style="left:839.5px;top:534.71px;font-size:7.15px;line-height:12px;color:#31363b;font-weight:normal;font-family:'Liberation Sans', sans-serif;"><u>A</u>nnuler</div>
</body></html>
